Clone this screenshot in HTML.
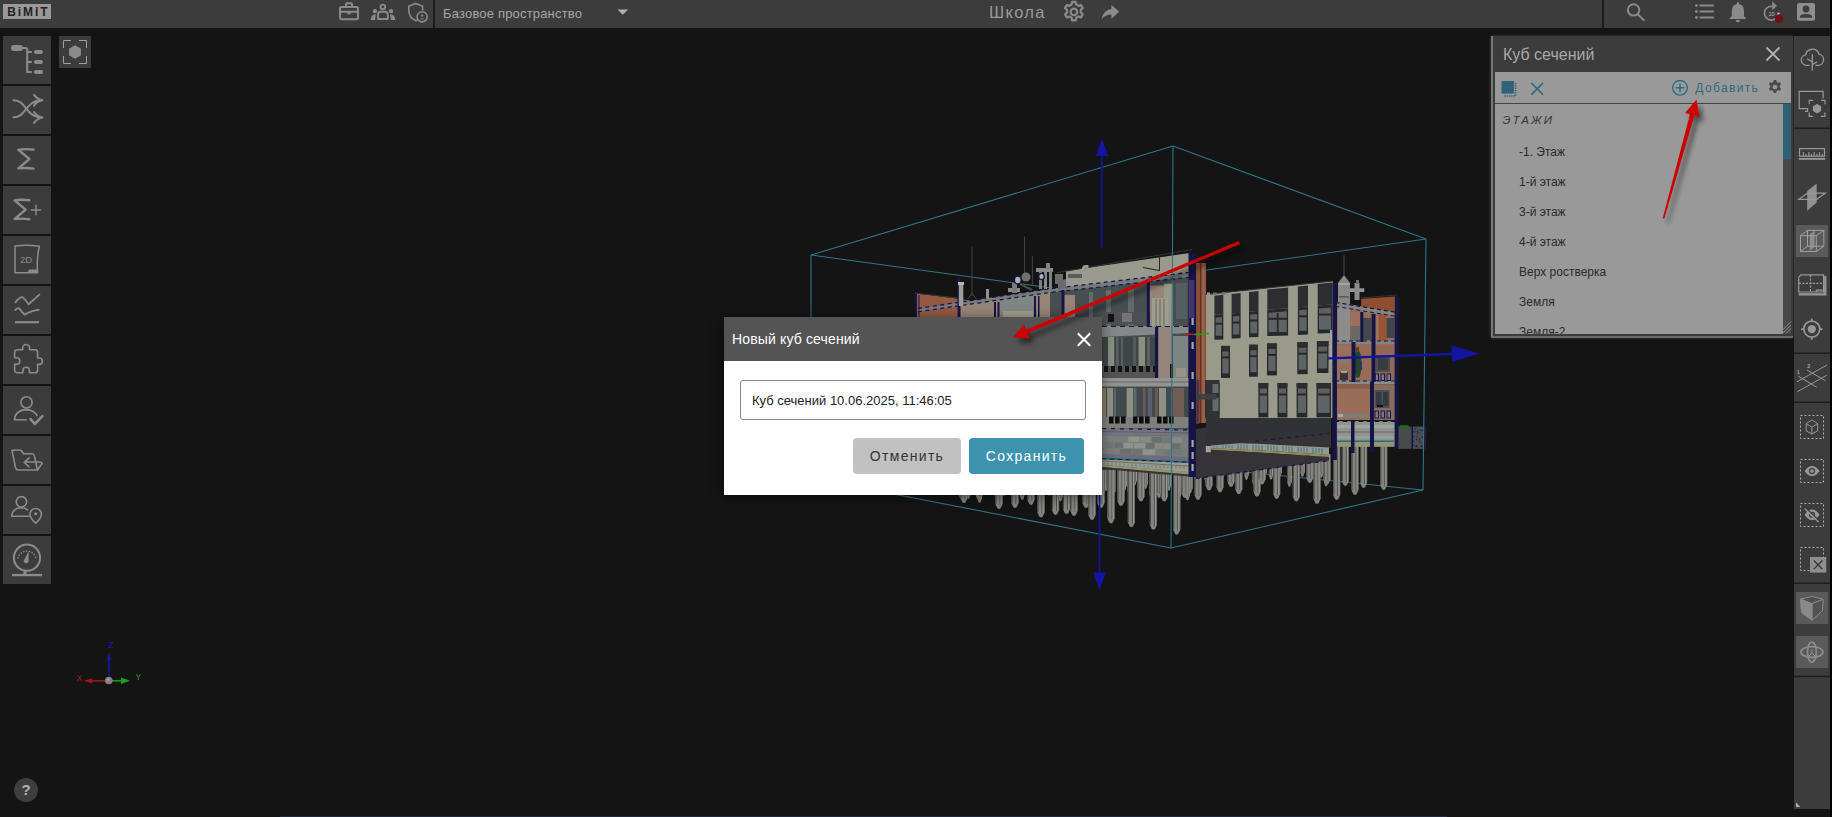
<!DOCTYPE html>
<html lang="ru">
<head>
<meta charset="utf-8">
<title>BIMIT</title>
<style>
*{box-sizing:border-box;margin:0;padding:0}
html,body{width:1832px;height:817px;overflow:hidden;background:#141414;font-family:"Liberation Sans",sans-serif;}
#app{position:absolute;left:0;top:0;width:1832px;height:817px;background:#141414;overflow:hidden}
.abs{position:absolute}
#topbar{position:absolute;left:0;top:0;width:1830px;height:28px;background:#3c3c3c}
#rightedge{position:absolute;left:1830px;top:0;width:2px;height:817px;background:#000}
.ic{position:absolute;overflow:visible}
.lbtn{position:absolute;left:3px;width:48px;height:48px;background:#3c3c3c}
.lbtn svg{position:absolute;left:0;top:0;width:48px;height:48px;overflow:visible}
#logo{position:absolute;left:3px;top:4px;width:48px;height:15px;background:#999;color:#222;font-weight:bold;font-size:12px;line-height:17.200px;text-align:left;padding-left:4.300px;letter-spacing:1.900px;white-space:nowrap}#logo i{font-style:normal;position:relative}#logo i::after{content:"";position:absolute;left:0.500px;top:2px;width:2.400px;height:2.400px;border-radius:.600px;background:#b00c0c}
.tdiv{position:absolute;top:0;height:28px;width:2px;background:#1c1c1c}
#space{position:absolute;left:443px;top:0;height:28px;line-height:27px;font-size:13px;letter-spacing:.180px;color:#a6a6a6;white-space:nowrap}
#proj{position:absolute;left:989px;top:0;height:28px;line-height:24px;font-size:16.500px;letter-spacing:1.300px;color:#9a9a9a;white-space:nowrap}
/* right toolbar */
#rtool{position:absolute;left:1794px;top:36px;width:36px;height:773px;background:#3c3c3c}
/* panel */
#panel{position:absolute;left:1491px;top:36px;width:302px;height:302px;background:#3c3c3c;border-left:2px solid #777;border-bottom:2px solid #6a6a6a;box-shadow:0 0 3px rgba(120,120,120,.5)}
#ptitle{position:absolute;left:10px;top:1px;height:35px;line-height:35px;font-size:16px;color:#a9a9a9;white-space:nowrap}
#pbar{position:absolute;left:2px;top:36px;width:296px;height:32px;background:#999;border-bottom:1px solid #444}
#plist{position:absolute;left:2px;top:68px;width:296px;height:230px;background:#999;overflow:hidden}
.pi{position:absolute;left:24px;font-size:12px;color:#2a2a2a;white-space:nowrap;height:30px;line-height:30px}
/* dialog */
#dlg{position:absolute;left:724px;top:317px;width:378px;height:178px;background:#fff;box-shadow:0 2px 12px rgba(0,0,0,.45)}
#dhead{position:absolute;left:0;top:0;width:378px;height:44px;background:#545454}
#dtitle{position:absolute;left:8px;top:0;height:44px;line-height:44px;font-size:14px;letter-spacing:.150px;color:#fff;white-space:nowrap}
#dinp{position:absolute;left:16px;top:63px;width:346px;height:40px;border:1px solid #8a8a8a;border-radius:3px;font-size:13px;color:#222;line-height:39.500px;padding-left:11px;white-space:nowrap}
.dbtn{position:absolute;top:121px;height:36px;border-radius:4px;font-size:14px;line-height:36px;text-align:center;letter-spacing:1.300px;white-space:nowrap}
</style>
</head>
<body>
<div id="app">

<!-- 3D SCENE -->
<svg id="scene" class="abs" style="left:0;top:0" width="1832" height="817" viewBox="0 0 1832 817">
<!--SCENE-->
<line x1="811.0" y1="255.0" x2="1066.0" y2="290.0" stroke="#2f7689" stroke-width="1.00" />
<line x1="1426.0" y1="239.0" x2="1066.0" y2="290.0" stroke="#2f7689" stroke-width="1.00" />
<line x1="1423.0" y1="490.0" x2="1066.0" y2="454.0" stroke="#2f7689" stroke-width="1.00" />
<line x1="811.0" y1="478.0" x2="1066.0" y2="454.0" stroke="#2f7689" stroke-width="1.00" />
<line x1="1066.0" y1="290.0" x2="1066.0" y2="454.0" stroke="#2f7689" stroke-width="1.00" />
<polygon points="955.3,462.0 959.3,462.0 959.3,480.5 958.2,484.7 957.3,485.5 956.4,484.7 955.3,480.5" fill="#82847c" />
<rect x="955.3" y="462.0" width="1.1" height="18.5" fill="#4a4a48" />
<rect x="957.9" y="462.0" width="1.4" height="18.5" fill="#666664" />
<rect x="957.6" y="462.0" width="1.0" height="19.5" fill="#50504e" />
<rect x="958.2" y="462.0" width="1.2" height="19.0" fill="#969696" />
<polygon points="963.6,462.0 967.6,462.0 967.6,479.7 966.5,483.9 965.6,484.7 964.7,483.9 963.6,479.7" fill="#82847c" />
<rect x="963.6" y="462.0" width="1.1" height="17.7" fill="#4a4a48" />
<rect x="966.2" y="462.0" width="1.4" height="17.7" fill="#666664" />
<rect x="965.9" y="462.0" width="1.0" height="18.7" fill="#50504e" />
<rect x="966.5" y="462.0" width="1.2" height="18.2" fill="#969696" />
<polygon points="970.1,462.0 974.1,462.0 974.1,482.7 973.0,486.9 972.1,487.7 971.2,486.9 970.1,482.7" fill="#82847c" />
<rect x="970.1" y="462.0" width="1.1" height="20.7" fill="#4a4a48" />
<rect x="972.7" y="462.0" width="1.4" height="20.7" fill="#666664" />
<rect x="972.4" y="462.0" width="1.0" height="21.7" fill="#50504e" />
<rect x="973.0" y="462.0" width="1.2" height="21.2" fill="#969696" />
<polygon points="975.2,462.0 979.2,462.0 979.2,484.1 978.1,488.3 977.2,489.1 976.3,488.3 975.2,484.1" fill="#82847c" />
<rect x="975.2" y="462.0" width="1.1" height="22.1" fill="#4a4a48" />
<rect x="977.8" y="462.0" width="1.4" height="22.1" fill="#666664" />
<rect x="977.5" y="462.0" width="1.0" height="23.1" fill="#50504e" />
<rect x="978.1" y="462.0" width="1.2" height="22.6" fill="#969696" />
<polygon points="982.1,462.0 986.1,462.0 986.1,483.3 985.0,487.5 984.1,488.3 983.2,487.5 982.1,483.3" fill="#82847c" />
<rect x="982.1" y="462.0" width="1.1" height="21.3" fill="#4a4a48" />
<rect x="984.7" y="462.0" width="1.4" height="21.3" fill="#666664" />
<rect x="984.4" y="462.0" width="1.0" height="22.3" fill="#50504e" />
<rect x="985.0" y="462.0" width="1.2" height="21.8" fill="#969696" />
<polygon points="989.3,462.0 993.3,462.0 993.3,479.9 992.2,484.1 991.3,484.9 990.4,484.1 989.3,479.9" fill="#82847c" />
<rect x="989.3" y="462.0" width="1.1" height="17.9" fill="#4a4a48" />
<rect x="991.9" y="462.0" width="1.4" height="17.9" fill="#666664" />
<rect x="991.6" y="462.0" width="1.0" height="18.9" fill="#50504e" />
<rect x="992.2" y="462.0" width="1.2" height="18.4" fill="#969696" />
<polygon points="997.7,462.0 1001.7,462.0 1001.7,487.3 1000.6,491.5 999.7,492.3 998.8,491.5 997.7,487.3" fill="#82847c" />
<rect x="997.7" y="462.0" width="1.1" height="25.3" fill="#4a4a48" />
<rect x="1000.3" y="462.0" width="1.4" height="25.3" fill="#666664" />
<rect x="1000.0" y="462.0" width="1.0" height="26.3" fill="#50504e" />
<rect x="1000.6" y="462.0" width="1.2" height="25.8" fill="#969696" />
<polygon points="1003.5,462.0 1007.5,462.0 1007.5,481.2 1006.4,485.4 1005.5,486.2 1004.6,485.4 1003.5,481.2" fill="#82847c" />
<rect x="1003.5" y="462.0" width="1.1" height="19.2" fill="#4a4a48" />
<rect x="1006.1" y="462.0" width="1.4" height="19.2" fill="#666664" />
<rect x="1005.8" y="462.0" width="1.0" height="20.2" fill="#50504e" />
<rect x="1006.4" y="462.0" width="1.2" height="19.7" fill="#969696" />
<polygon points="1012.5,462.0 1016.5,462.0 1016.5,488.5 1015.4,492.7 1014.5,493.5 1013.6,492.7 1012.5,488.5" fill="#82847c" />
<rect x="1012.5" y="462.0" width="1.1" height="26.5" fill="#4a4a48" />
<rect x="1015.1" y="462.0" width="1.4" height="26.5" fill="#666664" />
<rect x="1014.8" y="462.0" width="1.0" height="27.5" fill="#50504e" />
<rect x="1015.4" y="462.0" width="1.2" height="27.0" fill="#969696" />
<polygon points="1019.3,462.0 1023.3,462.0 1023.3,483.0 1022.2,487.2 1021.3,488.0 1020.4,487.2 1019.3,483.0" fill="#82847c" />
<rect x="1019.3" y="462.0" width="1.1" height="21.0" fill="#4a4a48" />
<rect x="1021.9" y="462.0" width="1.4" height="21.0" fill="#666664" />
<rect x="1021.6" y="462.0" width="1.0" height="22.0" fill="#50504e" />
<rect x="1022.2" y="462.0" width="1.2" height="21.5" fill="#969696" />
<polygon points="1027.9,462.0 1031.9,462.0 1031.9,479.5 1030.8,483.7 1029.9,484.5 1029.0,483.7 1027.9,479.5" fill="#82847c" />
<rect x="1027.9" y="462.0" width="1.1" height="17.5" fill="#4a4a48" />
<rect x="1030.5" y="462.0" width="1.4" height="17.5" fill="#666664" />
<rect x="1030.2" y="462.0" width="1.0" height="18.5" fill="#50504e" />
<rect x="1030.8" y="462.0" width="1.2" height="18.0" fill="#969696" />
<polygon points="1034.4,462.0 1038.4,462.0 1038.4,481.9 1037.3,486.1 1036.4,486.9 1035.5,486.1 1034.4,481.9" fill="#82847c" />
<rect x="1034.4" y="462.0" width="1.1" height="19.9" fill="#4a4a48" />
<rect x="1037.0" y="462.0" width="1.4" height="19.9" fill="#666664" />
<rect x="1036.7" y="462.0" width="1.0" height="20.9" fill="#50504e" />
<rect x="1037.3" y="462.0" width="1.2" height="20.4" fill="#969696" />
<polygon points="1038.6,462.0 1042.6,462.0 1042.6,480.2 1041.5,484.4 1040.6,485.2 1039.7,484.4 1038.6,480.2" fill="#82847c" />
<rect x="1038.6" y="462.0" width="1.1" height="18.2" fill="#4a4a48" />
<rect x="1041.2" y="462.0" width="1.4" height="18.2" fill="#666664" />
<rect x="1040.9" y="462.0" width="1.0" height="19.2" fill="#50504e" />
<rect x="1041.5" y="462.0" width="1.2" height="18.7" fill="#969696" />
<polygon points="1046.2,462.0 1050.2,462.0 1050.2,487.2 1049.1,491.4 1048.2,492.2 1047.3,491.4 1046.2,487.2" fill="#82847c" />
<rect x="1046.2" y="462.0" width="1.1" height="25.2" fill="#4a4a48" />
<rect x="1048.8" y="462.0" width="1.4" height="25.2" fill="#666664" />
<rect x="1048.5" y="462.0" width="1.0" height="26.2" fill="#50504e" />
<rect x="1049.1" y="462.0" width="1.2" height="25.7" fill="#969696" />
<polygon points="1052.7,462.0 1056.7,462.0 1056.7,484.8 1055.6,489.0 1054.7,489.8 1053.8,489.0 1052.7,484.8" fill="#82847c" />
<rect x="1052.7" y="462.0" width="1.1" height="22.8" fill="#4a4a48" />
<rect x="1055.3" y="462.0" width="1.4" height="22.8" fill="#666664" />
<rect x="1055.0" y="462.0" width="1.0" height="23.8" fill="#50504e" />
<rect x="1055.6" y="462.0" width="1.2" height="23.3" fill="#969696" />
<polygon points="1061.6,462.0 1065.6,462.0 1065.6,482.7 1064.5,486.9 1063.6,487.7 1062.7,486.9 1061.6,482.7" fill="#82847c" />
<rect x="1061.6" y="462.0" width="1.1" height="20.7" fill="#4a4a48" />
<rect x="1064.2" y="462.0" width="1.4" height="20.7" fill="#666664" />
<rect x="1063.9" y="462.0" width="1.0" height="21.7" fill="#50504e" />
<rect x="1064.5" y="462.0" width="1.2" height="21.2" fill="#969696" />
<polygon points="1068.2,462.0 1072.2,462.0 1072.2,479.6 1071.1,483.8 1070.2,484.6 1069.3,483.8 1068.2,479.6" fill="#82847c" />
<rect x="1068.2" y="462.0" width="1.1" height="17.6" fill="#4a4a48" />
<rect x="1070.8" y="462.0" width="1.4" height="17.6" fill="#666664" />
<rect x="1070.5" y="462.0" width="1.0" height="18.6" fill="#50504e" />
<rect x="1071.1" y="462.0" width="1.2" height="18.1" fill="#969696" />
<polygon points="1073.2,462.0 1077.2,462.0 1077.2,481.1 1076.1,485.3 1075.2,486.1 1074.3,485.3 1073.2,481.1" fill="#82847c" />
<rect x="1073.2" y="462.0" width="1.1" height="19.1" fill="#4a4a48" />
<rect x="1075.8" y="462.0" width="1.4" height="19.1" fill="#666664" />
<rect x="1075.5" y="462.0" width="1.0" height="20.1" fill="#50504e" />
<rect x="1076.1" y="462.0" width="1.2" height="19.6" fill="#969696" />
<polygon points="1082.7,462.0 1086.7,462.0 1086.7,483.3 1085.6,487.5 1084.7,488.3 1083.8,487.5 1082.7,483.3" fill="#82847c" />
<rect x="1082.7" y="462.0" width="1.1" height="21.3" fill="#4a4a48" />
<rect x="1085.3" y="462.0" width="1.4" height="21.3" fill="#666664" />
<rect x="1085.0" y="462.0" width="1.0" height="22.3" fill="#50504e" />
<rect x="1085.6" y="462.0" width="1.2" height="21.8" fill="#969696" />
<polygon points="1088.3,462.0 1092.3,462.0 1092.3,484.9 1091.2,489.1 1090.3,489.9 1089.4,489.1 1088.3,484.9" fill="#82847c" />
<rect x="1088.3" y="462.0" width="1.1" height="22.9" fill="#4a4a48" />
<rect x="1090.9" y="462.0" width="1.4" height="22.9" fill="#666664" />
<rect x="1090.6" y="462.0" width="1.0" height="23.9" fill="#50504e" />
<rect x="1091.2" y="462.0" width="1.2" height="23.4" fill="#969696" />
<polygon points="1095.8,462.0 1099.8,462.0 1099.8,482.0 1098.7,486.2 1097.8,487.0 1096.9,486.2 1095.8,482.0" fill="#82847c" />
<rect x="1095.8" y="462.0" width="1.1" height="20.0" fill="#4a4a48" />
<rect x="1098.4" y="462.0" width="1.4" height="20.0" fill="#666664" />
<rect x="1098.1" y="462.0" width="1.0" height="21.0" fill="#50504e" />
<rect x="1098.7" y="462.0" width="1.2" height="20.5" fill="#969696" />
<polygon points="1104.2,462.0 1108.2,462.0 1108.2,486.0 1107.1,490.2 1106.2,491.0 1105.3,490.2 1104.2,486.0" fill="#82847c" />
<rect x="1104.2" y="462.0" width="1.1" height="24.0" fill="#4a4a48" />
<rect x="1106.8" y="462.0" width="1.4" height="24.0" fill="#666664" />
<rect x="1106.5" y="462.0" width="1.0" height="25.0" fill="#50504e" />
<rect x="1107.1" y="462.0" width="1.2" height="24.5" fill="#969696" />
<polygon points="1109.0,462.0 1113.0,462.0 1113.0,484.7 1111.9,488.9 1111.0,489.7 1110.1,488.9 1109.0,484.7" fill="#82847c" />
<rect x="1109.0" y="462.0" width="1.1" height="22.7" fill="#4a4a48" />
<rect x="1111.6" y="462.0" width="1.4" height="22.7" fill="#666664" />
<rect x="1111.3" y="462.0" width="1.0" height="23.7" fill="#50504e" />
<rect x="1111.9" y="462.0" width="1.2" height="23.2" fill="#969696" />
<polygon points="1117.1,462.0 1121.1,462.0 1121.1,487.8 1120.0,492.0 1119.1,492.8 1118.2,492.0 1117.1,487.8" fill="#82847c" />
<rect x="1117.1" y="462.0" width="1.1" height="25.8" fill="#4a4a48" />
<rect x="1119.7" y="462.0" width="1.4" height="25.8" fill="#666664" />
<rect x="1119.4" y="462.0" width="1.0" height="26.8" fill="#50504e" />
<rect x="1120.0" y="462.0" width="1.2" height="26.3" fill="#969696" />
<polygon points="1124.9,462.0 1128.9,462.0 1128.9,481.9 1127.8,486.1 1126.9,486.9 1126.0,486.1 1124.9,481.9" fill="#82847c" />
<rect x="1124.9" y="462.0" width="1.1" height="19.9" fill="#4a4a48" />
<rect x="1127.5" y="462.0" width="1.4" height="19.9" fill="#666664" />
<rect x="1127.2" y="462.0" width="1.0" height="20.9" fill="#50504e" />
<rect x="1127.8" y="462.0" width="1.2" height="20.4" fill="#969696" />
<polygon points="1132.9,462.0 1136.9,462.0 1136.9,480.2 1135.8,484.4 1134.9,485.2 1134.0,484.4 1132.9,480.2" fill="#82847c" />
<rect x="1132.9" y="462.0" width="1.1" height="18.2" fill="#4a4a48" />
<rect x="1135.5" y="462.0" width="1.4" height="18.2" fill="#666664" />
<rect x="1135.2" y="462.0" width="1.0" height="19.2" fill="#50504e" />
<rect x="1135.8" y="462.0" width="1.2" height="18.7" fill="#969696" />
<polygon points="1137.7,462.0 1141.7,462.0 1141.7,486.6 1140.6,490.8 1139.7,491.6 1138.8,490.8 1137.7,486.6" fill="#82847c" />
<rect x="1137.7" y="462.0" width="1.1" height="24.6" fill="#4a4a48" />
<rect x="1140.3" y="462.0" width="1.4" height="24.6" fill="#666664" />
<rect x="1140.0" y="462.0" width="1.0" height="25.6" fill="#50504e" />
<rect x="1140.6" y="462.0" width="1.2" height="25.1" fill="#969696" />
<polygon points="1143.6,462.0 1147.6,462.0 1147.6,483.9 1146.5,488.1 1145.6,488.9 1144.7,488.1 1143.6,483.9" fill="#82847c" />
<rect x="1143.6" y="462.0" width="1.1" height="21.9" fill="#4a4a48" />
<rect x="1146.2" y="462.0" width="1.4" height="21.9" fill="#666664" />
<rect x="1145.9" y="462.0" width="1.0" height="22.9" fill="#50504e" />
<rect x="1146.5" y="462.0" width="1.2" height="22.4" fill="#969696" />
<polygon points="1150.2,462.0 1154.2,462.0 1154.2,485.7 1153.1,489.9 1152.2,490.7 1151.3,489.9 1150.2,485.7" fill="#82847c" />
<rect x="1150.2" y="462.0" width="1.1" height="23.7" fill="#4a4a48" />
<rect x="1152.8" y="462.0" width="1.4" height="23.7" fill="#666664" />
<rect x="1152.5" y="462.0" width="1.0" height="24.7" fill="#50504e" />
<rect x="1153.1" y="462.0" width="1.2" height="24.2" fill="#969696" />
<polygon points="1160.1,462.0 1164.1,462.0 1164.1,484.7 1163.0,488.9 1162.1,489.7 1161.2,488.9 1160.1,484.7" fill="#82847c" />
<rect x="1160.1" y="462.0" width="1.1" height="22.7" fill="#4a4a48" />
<rect x="1162.7" y="462.0" width="1.4" height="22.7" fill="#666664" />
<rect x="1162.4" y="462.0" width="1.0" height="23.7" fill="#50504e" />
<rect x="1163.0" y="462.0" width="1.2" height="23.2" fill="#969696" />
<polygon points="1167.5,462.0 1171.5,462.0 1171.5,482.1 1170.4,486.3 1169.5,487.1 1168.6,486.3 1167.5,482.1" fill="#82847c" />
<rect x="1167.5" y="462.0" width="1.1" height="20.1" fill="#4a4a48" />
<rect x="1170.1" y="462.0" width="1.4" height="20.1" fill="#666664" />
<rect x="1169.8" y="462.0" width="1.0" height="21.1" fill="#50504e" />
<rect x="1170.4" y="462.0" width="1.2" height="20.6" fill="#969696" />
<polygon points="1173.8,462.0 1177.8,462.0 1177.8,484.9 1176.7,489.1 1175.8,489.9 1174.9,489.1 1173.8,484.9" fill="#82847c" />
<rect x="1173.8" y="462.0" width="1.1" height="22.9" fill="#4a4a48" />
<rect x="1176.4" y="462.0" width="1.4" height="22.9" fill="#666664" />
<rect x="1176.1" y="462.0" width="1.0" height="23.9" fill="#50504e" />
<rect x="1176.7" y="462.0" width="1.2" height="23.4" fill="#969696" />
<polygon points="1180.3,462.0 1184.3,462.0 1184.3,483.6 1183.2,487.8 1182.3,488.6 1181.4,487.8 1180.3,483.6" fill="#82847c" />
<rect x="1180.3" y="462.0" width="1.1" height="21.6" fill="#4a4a48" />
<rect x="1182.9" y="462.0" width="1.4" height="21.6" fill="#666664" />
<rect x="1182.6" y="462.0" width="1.0" height="22.6" fill="#50504e" />
<rect x="1183.2" y="462.0" width="1.2" height="22.1" fill="#969696" />
<polygon points="1188.4,462.0 1192.4,462.0 1192.4,488.4 1191.3,492.6 1190.4,493.4 1189.5,492.6 1188.4,488.4" fill="#82847c" />
<rect x="1188.4" y="462.0" width="1.1" height="26.4" fill="#4a4a48" />
<rect x="1191.0" y="462.0" width="1.4" height="26.4" fill="#666664" />
<rect x="1190.7" y="462.0" width="1.0" height="27.4" fill="#50504e" />
<rect x="1191.3" y="462.0" width="1.2" height="26.9" fill="#969696" />
<polygon points="958.4,462.0 963.4,462.0 963.4,493.6 962.0,497.8 960.9,498.6 959.8,497.8 958.4,493.6" fill="#82847c" />
<rect x="958.4" y="462.0" width="1.1" height="31.6" fill="#4a4a48" />
<rect x="962.0" y="462.0" width="1.4" height="31.6" fill="#666664" />
<rect x="961.3" y="462.0" width="1.0" height="32.6" fill="#50504e" />
<rect x="962.0" y="462.0" width="1.2" height="32.1" fill="#969696" />
<polygon points="965.7,462.0 970.7,462.0 970.7,494.1 969.4,498.3 968.2,499.1 967.1,498.3 965.7,494.1" fill="#82847c" />
<rect x="965.7" y="462.0" width="1.1" height="32.1" fill="#4a4a48" />
<rect x="969.3" y="462.0" width="1.4" height="32.1" fill="#666664" />
<rect x="968.6" y="462.0" width="1.0" height="33.1" fill="#50504e" />
<rect x="969.4" y="462.0" width="1.2" height="32.6" fill="#969696" />
<polygon points="977.1,462.0 982.1,462.0 982.1,497.9 980.7,502.1 979.6,502.9 978.5,502.1 977.1,497.9" fill="#82847c" />
<rect x="977.1" y="462.0" width="1.1" height="35.9" fill="#4a4a48" />
<rect x="980.7" y="462.0" width="1.4" height="35.9" fill="#666664" />
<rect x="980.0" y="462.0" width="1.0" height="36.9" fill="#50504e" />
<rect x="980.7" y="462.0" width="1.2" height="36.4" fill="#969696" />
<polygon points="986.8,462.0 991.8,462.0 991.8,488.7 990.4,492.9 989.3,493.7 988.2,492.9 986.8,488.7" fill="#82847c" />
<rect x="986.8" y="462.0" width="1.1" height="26.7" fill="#4a4a48" />
<rect x="990.4" y="462.0" width="1.4" height="26.7" fill="#666664" />
<rect x="989.7" y="462.0" width="1.0" height="27.7" fill="#50504e" />
<rect x="990.4" y="462.0" width="1.2" height="27.2" fill="#969696" />
<polygon points="994.0,462.0 999.0,462.0 999.0,493.7 997.7,497.9 996.5,498.7 995.4,497.9 994.0,493.7" fill="#82847c" />
<rect x="994.0" y="462.0" width="1.1" height="31.7" fill="#4a4a48" />
<rect x="997.6" y="462.0" width="1.4" height="31.7" fill="#666664" />
<rect x="996.9" y="462.0" width="1.0" height="32.7" fill="#50504e" />
<rect x="997.7" y="462.0" width="1.2" height="32.2" fill="#969696" />
<polygon points="1001.6,462.0 1006.6,462.0 1006.6,491.0 1005.2,495.2 1004.1,496.0 1003.0,495.2 1001.6,491.0" fill="#82847c" />
<rect x="1001.6" y="462.0" width="1.1" height="29.0" fill="#4a4a48" />
<rect x="1005.2" y="462.0" width="1.4" height="29.0" fill="#666664" />
<rect x="1004.5" y="462.0" width="1.0" height="30.0" fill="#50504e" />
<rect x="1005.2" y="462.0" width="1.2" height="29.5" fill="#969696" />
<polygon points="1011.2,462.0 1016.2,462.0 1016.2,486.5 1014.8,490.7 1013.7,491.5 1012.5,490.7 1011.2,486.5" fill="#82847c" />
<rect x="1011.2" y="462.0" width="1.1" height="24.5" fill="#4a4a48" />
<rect x="1014.8" y="462.0" width="1.4" height="24.5" fill="#666664" />
<rect x="1014.0" y="462.0" width="1.0" height="25.5" fill="#50504e" />
<rect x="1014.8" y="462.0" width="1.2" height="25.0" fill="#969696" />
<polygon points="1019.7,462.0 1024.7,462.0 1024.7,495.0 1023.4,499.2 1022.2,500.0 1021.1,499.2 1019.7,495.0" fill="#82847c" />
<rect x="1019.7" y="462.0" width="1.1" height="33.0" fill="#4a4a48" />
<rect x="1023.3" y="462.0" width="1.4" height="33.0" fill="#666664" />
<rect x="1022.6" y="462.0" width="1.0" height="34.0" fill="#50504e" />
<rect x="1023.4" y="462.0" width="1.2" height="33.5" fill="#969696" />
<polygon points="1029.0,462.0 1034.0,462.0 1034.0,488.2 1032.6,492.4 1031.5,493.2 1030.4,492.4 1029.0,488.2" fill="#82847c" />
<rect x="1029.0" y="462.0" width="1.1" height="26.2" fill="#4a4a48" />
<rect x="1032.6" y="462.0" width="1.4" height="26.2" fill="#666664" />
<rect x="1031.9" y="462.0" width="1.0" height="27.2" fill="#50504e" />
<rect x="1032.6" y="462.0" width="1.2" height="26.7" fill="#969696" />
<polygon points="1039.1,462.0 1044.1,462.0 1044.1,496.3 1042.7,500.5 1041.6,501.3 1040.4,500.5 1039.1,496.3" fill="#82847c" />
<rect x="1039.1" y="462.0" width="1.1" height="34.3" fill="#4a4a48" />
<rect x="1042.7" y="462.0" width="1.4" height="34.3" fill="#666664" />
<rect x="1041.9" y="462.0" width="1.0" height="35.3" fill="#50504e" />
<rect x="1042.7" y="462.0" width="1.2" height="34.8" fill="#969696" />
<polygon points="1046.8,462.0 1051.8,462.0 1051.8,490.8 1050.4,495.0 1049.3,495.8 1048.2,495.0 1046.8,490.8" fill="#82847c" />
<rect x="1046.8" y="462.0" width="1.1" height="28.8" fill="#4a4a48" />
<rect x="1050.4" y="462.0" width="1.4" height="28.8" fill="#666664" />
<rect x="1049.7" y="462.0" width="1.0" height="29.8" fill="#50504e" />
<rect x="1050.4" y="462.0" width="1.2" height="29.3" fill="#969696" />
<polygon points="1057.7,462.0 1062.7,462.0 1062.7,496.5 1061.3,500.7 1060.2,501.5 1059.1,500.7 1057.7,496.5" fill="#82847c" />
<rect x="1057.7" y="462.0" width="1.1" height="34.5" fill="#4a4a48" />
<rect x="1061.3" y="462.0" width="1.4" height="34.5" fill="#666664" />
<rect x="1060.6" y="462.0" width="1.0" height="35.5" fill="#50504e" />
<rect x="1061.3" y="462.0" width="1.2" height="35.0" fill="#969696" />
<polygon points="1067.8,462.0 1072.8,462.0 1072.8,496.2 1071.4,500.4 1070.3,501.2 1069.2,500.4 1067.8,496.2" fill="#82847c" />
<rect x="1067.8" y="462.0" width="1.1" height="34.2" fill="#4a4a48" />
<rect x="1071.4" y="462.0" width="1.4" height="34.2" fill="#666664" />
<rect x="1070.7" y="462.0" width="1.0" height="35.2" fill="#50504e" />
<rect x="1071.4" y="462.0" width="1.2" height="34.7" fill="#969696" />
<polygon points="1074.6,462.0 1079.6,462.0 1079.6,490.4 1078.2,494.6 1077.1,495.4 1076.0,494.6 1074.6,490.4" fill="#82847c" />
<rect x="1074.6" y="462.0" width="1.1" height="28.4" fill="#4a4a48" />
<rect x="1078.2" y="462.0" width="1.4" height="28.4" fill="#666664" />
<rect x="1077.5" y="462.0" width="1.0" height="29.4" fill="#50504e" />
<rect x="1078.2" y="462.0" width="1.2" height="28.9" fill="#969696" />
<polygon points="1083.9,462.0 1088.9,462.0 1088.9,496.5 1087.6,500.7 1086.4,501.5 1085.3,500.7 1083.9,496.5" fill="#82847c" />
<rect x="1083.9" y="462.0" width="1.1" height="34.5" fill="#4a4a48" />
<rect x="1087.5" y="462.0" width="1.4" height="34.5" fill="#666664" />
<rect x="1086.8" y="462.0" width="1.0" height="35.5" fill="#50504e" />
<rect x="1087.6" y="462.0" width="1.2" height="35.0" fill="#969696" />
<polygon points="1095.3,462.0 1100.3,462.0 1100.3,487.0 1099.0,491.2 1097.8,492.0 1096.7,491.2 1095.3,487.0" fill="#82847c" />
<rect x="1095.3" y="462.0" width="1.1" height="25.0" fill="#4a4a48" />
<rect x="1098.9" y="462.0" width="1.4" height="25.0" fill="#666664" />
<rect x="1098.2" y="462.0" width="1.0" height="26.0" fill="#50504e" />
<rect x="1099.0" y="462.0" width="1.2" height="25.5" fill="#969696" />
<polygon points="1101.2,462.0 1106.2,462.0 1106.2,488.0 1104.8,492.2 1103.7,493.0 1102.6,492.2 1101.2,488.0" fill="#82847c" />
<rect x="1101.2" y="462.0" width="1.1" height="26.0" fill="#4a4a48" />
<rect x="1104.8" y="462.0" width="1.4" height="26.0" fill="#666664" />
<rect x="1104.1" y="462.0" width="1.0" height="27.0" fill="#50504e" />
<rect x="1104.8" y="462.0" width="1.2" height="26.5" fill="#969696" />
<polygon points="1110.4,462.0 1115.4,462.0 1115.4,491.3 1114.1,495.5 1112.9,496.3 1111.8,495.5 1110.4,491.3" fill="#82847c" />
<rect x="1110.4" y="462.0" width="1.1" height="29.3" fill="#4a4a48" />
<rect x="1114.0" y="462.0" width="1.4" height="29.3" fill="#666664" />
<rect x="1113.3" y="462.0" width="1.0" height="30.3" fill="#50504e" />
<rect x="1114.1" y="462.0" width="1.2" height="29.8" fill="#969696" />
<polygon points="1120.9,462.0 1125.9,462.0 1125.9,488.4 1124.5,492.6 1123.4,493.4 1122.2,492.6 1120.9,488.4" fill="#82847c" />
<rect x="1120.9" y="462.0" width="1.1" height="26.4" fill="#4a4a48" />
<rect x="1124.5" y="462.0" width="1.4" height="26.4" fill="#666664" />
<rect x="1123.7" y="462.0" width="1.0" height="27.4" fill="#50504e" />
<rect x="1124.5" y="462.0" width="1.2" height="26.9" fill="#969696" />
<polygon points="1127.5,462.0 1132.5,462.0 1132.5,490.4 1131.1,494.6 1130.0,495.4 1128.9,494.6 1127.5,490.4" fill="#82847c" />
<rect x="1127.5" y="462.0" width="1.1" height="28.4" fill="#4a4a48" />
<rect x="1131.1" y="462.0" width="1.4" height="28.4" fill="#666664" />
<rect x="1130.4" y="462.0" width="1.0" height="29.4" fill="#50504e" />
<rect x="1131.1" y="462.0" width="1.2" height="28.9" fill="#969696" />
<polygon points="1138.0,462.0 1143.0,462.0 1143.0,492.4 1141.6,496.6 1140.5,497.4 1139.4,496.6 1138.0,492.4" fill="#82847c" />
<rect x="1138.0" y="462.0" width="1.1" height="30.4" fill="#4a4a48" />
<rect x="1141.6" y="462.0" width="1.4" height="30.4" fill="#666664" />
<rect x="1140.9" y="462.0" width="1.0" height="31.4" fill="#50504e" />
<rect x="1141.6" y="462.0" width="1.2" height="30.9" fill="#969696" />
<polygon points="1149.3,462.0 1154.3,462.0 1154.3,494.0 1152.9,498.2 1151.8,499.0 1150.7,498.2 1149.3,494.0" fill="#82847c" />
<rect x="1149.3" y="462.0" width="1.1" height="32.0" fill="#4a4a48" />
<rect x="1152.9" y="462.0" width="1.4" height="32.0" fill="#666664" />
<rect x="1152.2" y="462.0" width="1.0" height="33.0" fill="#50504e" />
<rect x="1152.9" y="462.0" width="1.2" height="32.5" fill="#969696" />
<polygon points="1156.6,462.0 1161.6,462.0 1161.6,493.0 1160.2,497.2 1159.1,498.0 1157.9,497.2 1156.6,493.0" fill="#82847c" />
<rect x="1156.6" y="462.0" width="1.1" height="31.0" fill="#4a4a48" />
<rect x="1160.2" y="462.0" width="1.4" height="31.0" fill="#666664" />
<rect x="1159.4" y="462.0" width="1.0" height="32.0" fill="#50504e" />
<rect x="1160.2" y="462.0" width="1.2" height="31.5" fill="#969696" />
<polygon points="1166.2,462.0 1171.2,462.0 1171.2,485.7 1169.8,489.9 1168.7,490.7 1167.6,489.9 1166.2,485.7" fill="#82847c" />
<rect x="1166.2" y="462.0" width="1.1" height="23.7" fill="#4a4a48" />
<rect x="1169.8" y="462.0" width="1.4" height="23.7" fill="#666664" />
<rect x="1169.1" y="462.0" width="1.0" height="24.7" fill="#50504e" />
<rect x="1169.8" y="462.0" width="1.2" height="24.2" fill="#969696" />
<polygon points="1176.1,462.0 1181.1,462.0 1181.1,495.1 1179.7,499.3 1178.6,500.1 1177.5,499.3 1176.1,495.1" fill="#82847c" />
<rect x="1176.1" y="462.0" width="1.1" height="33.1" fill="#4a4a48" />
<rect x="1179.7" y="462.0" width="1.4" height="33.1" fill="#666664" />
<rect x="1179.0" y="462.0" width="1.0" height="34.1" fill="#50504e" />
<rect x="1179.7" y="462.0" width="1.2" height="33.6" fill="#969696" />
<polygon points="1185.0,462.0 1190.0,462.0 1190.0,495.4 1188.6,499.6 1187.5,500.4 1186.4,499.6 1185.0,495.4" fill="#82847c" />
<rect x="1185.0" y="462.0" width="1.1" height="33.4" fill="#4a4a48" />
<rect x="1188.6" y="462.0" width="1.4" height="33.4" fill="#666664" />
<rect x="1187.9" y="462.0" width="1.0" height="34.4" fill="#50504e" />
<rect x="1188.6" y="462.0" width="1.2" height="33.9" fill="#969696" />
<polygon points="960.4,462.0 967.6,462.0 967.6,498.0 965.6,502.2 964.0,503.0 962.4,502.2 960.4,498.0" fill="#82847c" />
<rect x="960.4" y="462.0" width="1.1" height="36.0" fill="#4a4a48" />
<rect x="966.2" y="462.0" width="1.4" height="36.0" fill="#666664" />
<rect x="964.5" y="462.0" width="1.0" height="37.0" fill="#50504e" />
<rect x="965.6" y="462.0" width="1.2" height="36.5" fill="#969696" />
<polygon points="975.4,462.0 982.6,462.0 982.6,495.0 980.6,499.2 979.0,500.0 977.4,499.2 975.4,495.0" fill="#82847c" />
<rect x="975.4" y="462.0" width="1.1" height="33.0" fill="#4a4a48" />
<rect x="981.2" y="462.0" width="1.4" height="33.0" fill="#666664" />
<rect x="979.5" y="462.0" width="1.0" height="34.0" fill="#50504e" />
<rect x="980.6" y="462.0" width="1.2" height="33.5" fill="#969696" />
<polygon points="995.4,462.0 1002.6,462.0 1002.6,504.0 1000.6,508.2 999.0,509.0 997.4,508.2 995.4,504.0" fill="#82847c" />
<rect x="995.4" y="462.0" width="1.1" height="42.0" fill="#4a4a48" />
<rect x="1001.2" y="462.0" width="1.4" height="42.0" fill="#666664" />
<rect x="999.5" y="462.0" width="1.0" height="43.0" fill="#50504e" />
<rect x="1000.6" y="462.0" width="1.2" height="42.5" fill="#969696" />
<polygon points="1011.4,462.0 1018.6,462.0 1018.6,503.0 1016.6,507.2 1015.0,508.0 1013.4,507.2 1011.4,503.0" fill="#82847c" />
<rect x="1011.4" y="462.0" width="1.1" height="41.0" fill="#4a4a48" />
<rect x="1017.2" y="462.0" width="1.4" height="41.0" fill="#666664" />
<rect x="1015.5" y="462.0" width="1.0" height="42.0" fill="#50504e" />
<rect x="1016.6" y="462.0" width="1.2" height="41.5" fill="#969696" />
<polygon points="1027.4,462.0 1034.6,462.0 1034.6,500.0 1032.6,504.2 1031.0,505.0 1029.4,504.2 1027.4,500.0" fill="#82847c" />
<rect x="1027.4" y="462.0" width="1.1" height="38.0" fill="#4a4a48" />
<rect x="1033.2" y="462.0" width="1.4" height="38.0" fill="#666664" />
<rect x="1031.5" y="462.0" width="1.0" height="39.0" fill="#50504e" />
<rect x="1032.6" y="462.0" width="1.2" height="38.5" fill="#969696" />
<polygon points="1037.4,462.0 1044.6,462.0 1044.6,512.5 1042.6,516.7 1041.0,517.5 1039.4,516.7 1037.4,512.5" fill="#82847c" />
<rect x="1037.4" y="462.0" width="1.1" height="50.5" fill="#4a4a48" />
<rect x="1043.2" y="462.0" width="1.4" height="50.5" fill="#666664" />
<rect x="1041.5" y="462.0" width="1.0" height="51.5" fill="#50504e" />
<rect x="1042.6" y="462.0" width="1.2" height="51.0" fill="#969696" />
<polygon points="1051.9,462.0 1059.1,462.0 1059.1,510.0 1057.1,514.2 1055.5,515.0 1053.9,514.2 1051.9,510.0" fill="#82847c" />
<rect x="1051.9" y="462.0" width="1.1" height="48.0" fill="#4a4a48" />
<rect x="1057.7" y="462.0" width="1.4" height="48.0" fill="#666664" />
<rect x="1056.0" y="462.0" width="1.0" height="49.0" fill="#50504e" />
<rect x="1057.1" y="462.0" width="1.2" height="48.5" fill="#969696" />
<polygon points="1062.9,462.0 1070.1,462.0 1070.1,509.0 1068.1,513.2 1066.5,514.0 1064.9,513.2 1062.9,509.0" fill="#82847c" />
<rect x="1062.9" y="462.0" width="1.1" height="47.0" fill="#4a4a48" />
<rect x="1068.7" y="462.0" width="1.4" height="47.0" fill="#666664" />
<rect x="1067.0" y="462.0" width="1.0" height="48.0" fill="#50504e" />
<rect x="1068.1" y="462.0" width="1.2" height="47.5" fill="#969696" />
<polygon points="1070.4,462.0 1077.6,462.0 1077.6,511.0 1075.6,515.2 1074.0,516.0 1072.4,515.2 1070.4,511.0" fill="#82847c" />
<rect x="1070.4" y="462.0" width="1.1" height="49.0" fill="#4a4a48" />
<rect x="1076.2" y="462.0" width="1.4" height="49.0" fill="#666664" />
<rect x="1074.5" y="462.0" width="1.0" height="50.0" fill="#50504e" />
<rect x="1075.6" y="462.0" width="1.2" height="49.5" fill="#969696" />
<polygon points="1082.4,462.0 1089.6,462.0 1089.6,503.0 1087.6,507.2 1086.0,508.0 1084.4,507.2 1082.4,503.0" fill="#82847c" />
<rect x="1082.4" y="462.0" width="1.1" height="41.0" fill="#4a4a48" />
<rect x="1088.2" y="462.0" width="1.4" height="41.0" fill="#666664" />
<rect x="1086.5" y="462.0" width="1.0" height="42.0" fill="#50504e" />
<rect x="1087.6" y="462.0" width="1.2" height="41.5" fill="#969696" />
<polygon points="1088.4,462.0 1095.6,462.0 1095.6,515.0 1093.6,519.2 1092.0,520.0 1090.4,519.2 1088.4,515.0" fill="#82847c" />
<rect x="1088.4" y="462.0" width="1.1" height="53.0" fill="#4a4a48" />
<rect x="1094.2" y="462.0" width="1.4" height="53.0" fill="#666664" />
<rect x="1092.5" y="462.0" width="1.0" height="54.0" fill="#50504e" />
<rect x="1093.6" y="462.0" width="1.2" height="53.5" fill="#969696" />
<polygon points="1097.4,462.0 1104.6,462.0 1104.6,503.0 1102.6,507.2 1101.0,508.0 1099.4,507.2 1097.4,503.0" fill="#82847c" />
<rect x="1097.4" y="462.0" width="1.1" height="41.0" fill="#4a4a48" />
<rect x="1103.2" y="462.0" width="1.4" height="41.0" fill="#666664" />
<rect x="1101.5" y="462.0" width="1.0" height="42.0" fill="#50504e" />
<rect x="1102.6" y="462.0" width="1.2" height="41.5" fill="#969696" />
<polygon points="1107.4,462.0 1114.6,462.0 1114.6,518.6 1112.6,522.8 1111.0,523.6 1109.4,522.8 1107.4,518.6" fill="#82847c" />
<rect x="1107.4" y="462.0" width="1.1" height="56.6" fill="#4a4a48" />
<rect x="1113.2" y="462.0" width="1.4" height="56.6" fill="#666664" />
<rect x="1111.5" y="462.0" width="1.0" height="57.6" fill="#50504e" />
<rect x="1112.6" y="462.0" width="1.2" height="57.1" fill="#969696" />
<polygon points="1117.4,462.0 1124.6,462.0 1124.6,501.0 1122.6,505.2 1121.0,506.0 1119.4,505.2 1117.4,501.0" fill="#82847c" />
<rect x="1117.4" y="462.0" width="1.1" height="39.0" fill="#4a4a48" />
<rect x="1123.2" y="462.0" width="1.4" height="39.0" fill="#666664" />
<rect x="1121.5" y="462.0" width="1.0" height="40.0" fill="#50504e" />
<rect x="1122.6" y="462.0" width="1.2" height="39.5" fill="#969696" />
<polygon points="1127.8,462.0 1135.0,462.0 1135.0,522.3 1133.0,526.5 1131.4,527.3 1129.8,526.5 1127.8,522.3" fill="#82847c" />
<rect x="1127.8" y="462.0" width="1.1" height="60.3" fill="#4a4a48" />
<rect x="1133.6" y="462.0" width="1.4" height="60.3" fill="#666664" />
<rect x="1131.9" y="462.0" width="1.0" height="61.3" fill="#50504e" />
<rect x="1133.0" y="462.0" width="1.2" height="60.8" fill="#969696" />
<polygon points="1137.4,462.0 1144.6,462.0 1144.6,496.6 1142.6,500.8 1141.0,501.6 1139.4,500.8 1137.4,496.6" fill="#82847c" />
<rect x="1137.4" y="462.0" width="1.1" height="34.6" fill="#4a4a48" />
<rect x="1143.2" y="462.0" width="1.4" height="34.6" fill="#666664" />
<rect x="1141.5" y="462.0" width="1.0" height="35.6" fill="#50504e" />
<rect x="1142.6" y="462.0" width="1.2" height="35.1" fill="#969696" />
<polygon points="1149.8,462.0 1157.0,462.0 1157.0,524.8 1155.0,529.0 1153.4,529.8 1151.8,529.0 1149.8,524.8" fill="#82847c" />
<rect x="1149.8" y="462.0" width="1.1" height="62.8" fill="#4a4a48" />
<rect x="1155.6" y="462.0" width="1.4" height="62.8" fill="#666664" />
<rect x="1153.9" y="462.0" width="1.0" height="63.8" fill="#50504e" />
<rect x="1155.0" y="462.0" width="1.2" height="63.3" fill="#969696" />
<polygon points="1160.8,462.0 1168.0,462.0 1168.0,496.6 1166.0,500.8 1164.4,501.6 1162.8,500.8 1160.8,496.6" fill="#82847c" />
<rect x="1160.8" y="462.0" width="1.1" height="34.6" fill="#4a4a48" />
<rect x="1166.6" y="462.0" width="1.4" height="34.6" fill="#666664" />
<rect x="1164.9" y="462.0" width="1.0" height="35.6" fill="#50504e" />
<rect x="1166.0" y="462.0" width="1.2" height="35.1" fill="#969696" />
<polygon points="1173.1,462.0 1180.3,462.0 1180.3,529.7 1178.3,533.9 1176.7,534.7 1175.1,533.9 1173.1,529.7" fill="#82847c" />
<rect x="1173.1" y="462.0" width="1.1" height="67.7" fill="#4a4a48" />
<rect x="1178.9" y="462.0" width="1.4" height="67.7" fill="#666664" />
<rect x="1177.2" y="462.0" width="1.0" height="68.7" fill="#50504e" />
<rect x="1178.3" y="462.0" width="1.2" height="68.2" fill="#969696" />
<polygon points="1181.4,462.0 1188.6,462.0 1188.6,493.0 1186.6,497.2 1185.0,498.0 1183.4,497.2 1181.4,493.0" fill="#82847c" />
<rect x="1181.4" y="462.0" width="1.1" height="31.0" fill="#4a4a48" />
<rect x="1187.2" y="462.0" width="1.4" height="31.0" fill="#666664" />
<rect x="1185.5" y="462.0" width="1.0" height="32.0" fill="#50504e" />
<rect x="1186.6" y="462.0" width="1.2" height="31.5" fill="#969696" />
<polygon points="1197.3,455.0 1201.8,455.0 1201.8,475.4 1200.6,479.6 1199.6,480.4 1198.6,479.6 1197.3,475.4" fill="#82847c" />
<rect x="1197.3" y="455.0" width="1.1" height="20.4" fill="#4a4a48" />
<rect x="1200.4" y="455.0" width="1.4" height="20.4" fill="#666664" />
<rect x="1199.9" y="455.0" width="1.0" height="21.4" fill="#50504e" />
<rect x="1200.6" y="455.0" width="1.2" height="20.9" fill="#969696" />
<polygon points="1204.2,455.0 1208.7,455.0 1208.7,478.0 1207.4,482.2 1206.4,483.0 1205.4,482.2 1204.2,478.0" fill="#82847c" />
<rect x="1204.2" y="455.0" width="1.1" height="23.0" fill="#4a4a48" />
<rect x="1207.3" y="455.0" width="1.4" height="23.0" fill="#666664" />
<rect x="1206.8" y="455.0" width="1.0" height="24.0" fill="#50504e" />
<rect x="1207.4" y="455.0" width="1.2" height="23.5" fill="#969696" />
<polygon points="1212.0,455.0 1216.5,455.0 1216.5,471.7 1215.3,475.9 1214.2,476.7 1213.2,475.9 1212.0,471.7" fill="#82847c" />
<rect x="1212.0" y="455.0" width="1.1" height="16.7" fill="#4a4a48" />
<rect x="1215.1" y="455.0" width="1.4" height="16.7" fill="#666664" />
<rect x="1214.6" y="455.0" width="1.0" height="17.7" fill="#50504e" />
<rect x="1215.3" y="455.0" width="1.2" height="17.2" fill="#969696" />
<polygon points="1220.6,455.0 1225.1,455.0 1225.1,472.8 1223.8,477.0 1222.8,477.8 1221.8,477.0 1220.6,472.8" fill="#82847c" />
<rect x="1220.6" y="455.0" width="1.1" height="17.8" fill="#4a4a48" />
<rect x="1223.7" y="455.0" width="1.4" height="17.8" fill="#666664" />
<rect x="1223.2" y="455.0" width="1.0" height="18.8" fill="#50504e" />
<rect x="1223.8" y="455.0" width="1.2" height="18.3" fill="#969696" />
<polygon points="1229.1,455.0 1233.6,455.0 1233.6,471.6 1232.4,475.8 1231.4,476.6 1230.3,475.8 1229.1,471.6" fill="#82847c" />
<rect x="1229.1" y="455.0" width="1.1" height="16.6" fill="#4a4a48" />
<rect x="1232.2" y="455.0" width="1.4" height="16.6" fill="#666664" />
<rect x="1231.7" y="455.0" width="1.0" height="17.6" fill="#50504e" />
<rect x="1232.4" y="455.0" width="1.2" height="17.1" fill="#969696" />
<polygon points="1235.8,455.0 1240.3,455.0 1240.3,472.7 1239.0,476.9 1238.0,477.7 1237.0,476.9 1235.8,472.7" fill="#82847c" />
<rect x="1235.8" y="455.0" width="1.1" height="17.7" fill="#4a4a48" />
<rect x="1238.9" y="455.0" width="1.4" height="17.7" fill="#666664" />
<rect x="1238.3" y="455.0" width="1.0" height="18.7" fill="#50504e" />
<rect x="1239.0" y="455.0" width="1.2" height="18.2" fill="#969696" />
<polygon points="1244.2,455.0 1248.7,455.0 1248.7,475.0 1247.4,479.2 1246.4,480.0 1245.4,479.2 1244.2,475.0" fill="#82847c" />
<rect x="1244.2" y="455.0" width="1.1" height="20.0" fill="#4a4a48" />
<rect x="1247.3" y="455.0" width="1.4" height="20.0" fill="#666664" />
<rect x="1246.7" y="455.0" width="1.0" height="21.0" fill="#50504e" />
<rect x="1247.4" y="455.0" width="1.2" height="20.5" fill="#969696" />
<polygon points="1251.9,455.0 1256.4,455.0 1256.4,480.6 1255.1,484.8 1254.1,485.6 1253.1,484.8 1251.9,480.6" fill="#82847c" />
<rect x="1251.9" y="455.0" width="1.1" height="25.6" fill="#4a4a48" />
<rect x="1255.0" y="455.0" width="1.4" height="25.6" fill="#666664" />
<rect x="1254.4" y="455.0" width="1.0" height="26.6" fill="#50504e" />
<rect x="1255.1" y="455.0" width="1.2" height="26.1" fill="#969696" />
<polygon points="1262.2,455.0 1266.7,455.0 1266.7,472.6 1265.5,476.8 1264.5,477.6 1263.4,476.8 1262.2,472.6" fill="#82847c" />
<rect x="1262.2" y="455.0" width="1.1" height="17.6" fill="#4a4a48" />
<rect x="1265.3" y="455.0" width="1.4" height="17.6" fill="#666664" />
<rect x="1264.8" y="455.0" width="1.0" height="18.6" fill="#50504e" />
<rect x="1265.5" y="455.0" width="1.2" height="18.1" fill="#969696" />
<polygon points="1268.8,455.0 1273.3,455.0 1273.3,474.8 1272.0,479.0 1271.0,479.8 1270.0,479.0 1268.8,474.8" fill="#82847c" />
<rect x="1268.8" y="455.0" width="1.1" height="19.8" fill="#4a4a48" />
<rect x="1271.9" y="455.0" width="1.4" height="19.8" fill="#666664" />
<rect x="1271.3" y="455.0" width="1.0" height="20.8" fill="#50504e" />
<rect x="1272.0" y="455.0" width="1.2" height="20.3" fill="#969696" />
<polygon points="1277.2,455.0 1281.7,455.0 1281.7,472.4 1280.5,476.6 1279.5,477.4 1278.4,476.6 1277.2,472.4" fill="#82847c" />
<rect x="1277.2" y="455.0" width="1.1" height="17.4" fill="#4a4a48" />
<rect x="1280.3" y="455.0" width="1.4" height="17.4" fill="#666664" />
<rect x="1279.8" y="455.0" width="1.0" height="18.4" fill="#50504e" />
<rect x="1280.5" y="455.0" width="1.2" height="17.9" fill="#969696" />
<polygon points="1287.1,455.0 1291.6,455.0 1291.6,481.9 1290.4,486.1 1289.4,486.9 1288.4,486.1 1287.1,481.9" fill="#82847c" />
<rect x="1287.1" y="455.0" width="1.1" height="26.9" fill="#4a4a48" />
<rect x="1290.2" y="455.0" width="1.4" height="26.9" fill="#666664" />
<rect x="1289.7" y="455.0" width="1.0" height="27.9" fill="#50504e" />
<rect x="1290.4" y="455.0" width="1.2" height="27.4" fill="#969696" />
<polygon points="1293.6,455.0 1298.1,455.0 1298.1,476.3 1296.9,480.5 1295.9,481.3 1294.9,480.5 1293.6,476.3" fill="#82847c" />
<rect x="1293.6" y="455.0" width="1.1" height="21.3" fill="#4a4a48" />
<rect x="1296.7" y="455.0" width="1.4" height="21.3" fill="#666664" />
<rect x="1296.2" y="455.0" width="1.0" height="22.3" fill="#50504e" />
<rect x="1296.9" y="455.0" width="1.2" height="21.8" fill="#969696" />
<polygon points="1300.1,455.0 1304.6,455.0 1304.6,472.1 1303.4,476.3 1302.3,477.1 1301.3,476.3 1300.1,472.1" fill="#82847c" />
<rect x="1300.1" y="455.0" width="1.1" height="17.1" fill="#4a4a48" />
<rect x="1303.2" y="455.0" width="1.4" height="17.1" fill="#666664" />
<rect x="1302.7" y="455.0" width="1.0" height="18.1" fill="#50504e" />
<rect x="1303.4" y="455.0" width="1.2" height="17.6" fill="#969696" />
<polygon points="1309.1,455.0 1313.6,455.0 1313.6,473.9 1312.4,478.1 1311.4,478.9 1310.4,478.1 1309.1,473.9" fill="#82847c" />
<rect x="1309.1" y="455.0" width="1.1" height="18.9" fill="#4a4a48" />
<rect x="1312.2" y="455.0" width="1.4" height="18.9" fill="#666664" />
<rect x="1311.7" y="455.0" width="1.0" height="19.9" fill="#50504e" />
<rect x="1312.4" y="455.0" width="1.2" height="19.4" fill="#969696" />
<polygon points="1319.1,455.0 1323.6,455.0 1323.6,472.8 1322.3,477.0 1321.3,477.8 1320.3,477.0 1319.1,472.8" fill="#82847c" />
<rect x="1319.1" y="455.0" width="1.1" height="17.8" fill="#4a4a48" />
<rect x="1322.2" y="455.0" width="1.4" height="17.8" fill="#666664" />
<rect x="1321.7" y="455.0" width="1.0" height="18.8" fill="#50504e" />
<rect x="1322.3" y="455.0" width="1.2" height="18.3" fill="#969696" />
<polygon points="1323.8,455.0 1328.3,455.0 1328.3,481.5 1327.1,485.7 1326.1,486.5 1325.1,485.7 1323.8,481.5" fill="#82847c" />
<rect x="1323.8" y="455.0" width="1.1" height="26.5" fill="#4a4a48" />
<rect x="1326.9" y="455.0" width="1.4" height="26.5" fill="#666664" />
<rect x="1326.4" y="455.0" width="1.0" height="27.5" fill="#50504e" />
<rect x="1327.1" y="455.0" width="1.2" height="27.0" fill="#969696" />
<polygon points="1194.5,471.7 1201.5,471.7 1201.5,495.0 1199.6,499.2 1198.0,500.0 1196.4,499.2 1194.5,495.0" fill="#82847c" />
<rect x="1194.5" y="471.7" width="1.1" height="23.3" fill="#4a4a48" />
<rect x="1200.1" y="471.7" width="1.4" height="23.3" fill="#666664" />
<rect x="1198.5" y="471.7" width="1.0" height="24.3" fill="#50504e" />
<rect x="1199.6" y="471.7" width="1.2" height="23.8" fill="#969696" />
<polygon points="1205.5,470.2 1212.5,470.2 1212.5,485.6 1210.6,489.8 1209.0,490.6 1207.4,489.8 1205.5,485.6" fill="#82847c" />
<rect x="1205.5" y="470.2" width="1.1" height="15.4" fill="#4a4a48" />
<rect x="1211.1" y="470.2" width="1.4" height="15.4" fill="#666664" />
<rect x="1209.5" y="470.2" width="1.0" height="16.4" fill="#50504e" />
<rect x="1210.6" y="470.2" width="1.2" height="15.9" fill="#969696" />
<polygon points="1216.5,468.8 1223.5,468.8 1223.5,487.5 1221.6,491.7 1220.0,492.5 1218.4,491.7 1216.5,487.5" fill="#82847c" />
<rect x="1216.5" y="468.8" width="1.1" height="18.7" fill="#4a4a48" />
<rect x="1222.1" y="468.8" width="1.4" height="18.7" fill="#666664" />
<rect x="1220.5" y="468.8" width="1.0" height="19.7" fill="#50504e" />
<rect x="1221.6" y="468.8" width="1.2" height="19.2" fill="#969696" />
<polygon points="1227.5,467.3 1234.5,467.3 1234.5,482.0 1232.6,486.2 1231.0,487.0 1229.4,486.2 1227.5,482.0" fill="#82847c" />
<rect x="1227.5" y="467.3" width="1.1" height="14.7" fill="#4a4a48" />
<rect x="1233.1" y="467.3" width="1.4" height="14.7" fill="#666664" />
<rect x="1231.5" y="467.3" width="1.0" height="15.7" fill="#50504e" />
<rect x="1232.6" y="467.3" width="1.2" height="15.2" fill="#969696" />
<polygon points="1235.3,466.2 1242.3,466.2 1242.3,489.3 1240.4,493.5 1238.8,494.3 1237.2,493.5 1235.3,489.3" fill="#82847c" />
<rect x="1235.3" y="466.2" width="1.1" height="23.1" fill="#4a4a48" />
<rect x="1240.9" y="466.2" width="1.4" height="23.1" fill="#666664" />
<rect x="1239.3" y="466.2" width="1.0" height="24.1" fill="#50504e" />
<rect x="1240.4" y="466.2" width="1.2" height="23.6" fill="#969696" />
<polygon points="1253.5,463.7 1260.5,463.7 1260.5,491.7 1258.6,495.9 1257.0,496.7 1255.4,495.9 1253.5,491.7" fill="#82847c" />
<rect x="1253.5" y="463.7" width="1.1" height="28.0" fill="#4a4a48" />
<rect x="1259.1" y="463.7" width="1.4" height="28.0" fill="#666664" />
<rect x="1257.5" y="463.7" width="1.0" height="29.0" fill="#50504e" />
<rect x="1258.6" y="463.7" width="1.2" height="28.5" fill="#969696" />
<polygon points="1258.5,463.1 1265.5,463.1 1265.5,479.5 1263.6,483.7 1262.0,484.5 1260.4,483.7 1258.5,479.5" fill="#82847c" />
<rect x="1258.5" y="463.1" width="1.1" height="16.4" fill="#4a4a48" />
<rect x="1264.1" y="463.1" width="1.4" height="16.4" fill="#666664" />
<rect x="1262.5" y="463.1" width="1.0" height="17.4" fill="#50504e" />
<rect x="1263.6" y="463.1" width="1.2" height="16.9" fill="#969696" />
<polygon points="1273.2,461.1 1280.2,461.1 1280.2,494.0 1278.3,498.2 1276.7,499.0 1275.1,498.2 1273.2,494.0" fill="#82847c" />
<rect x="1273.2" y="461.1" width="1.1" height="32.9" fill="#4a4a48" />
<rect x="1278.8" y="461.1" width="1.4" height="32.9" fill="#666664" />
<rect x="1277.2" y="461.1" width="1.0" height="33.9" fill="#50504e" />
<rect x="1278.3" y="461.1" width="1.2" height="33.4" fill="#969696" />
<polygon points="1292.8,458.4 1299.8,458.4 1299.8,496.6 1297.9,500.8 1296.3,501.6 1294.7,500.8 1292.8,496.6" fill="#82847c" />
<rect x="1292.8" y="458.4" width="1.1" height="38.2" fill="#4a4a48" />
<rect x="1298.4" y="458.4" width="1.4" height="38.2" fill="#666664" />
<rect x="1296.8" y="458.4" width="1.0" height="39.2" fill="#50504e" />
<rect x="1297.9" y="458.4" width="1.2" height="38.7" fill="#969696" />
<polygon points="1306.3,456.6 1313.3,456.6 1313.3,478.0 1311.4,482.2 1309.8,483.0 1308.2,482.2 1306.3,478.0" fill="#82847c" />
<rect x="1306.3" y="456.6" width="1.1" height="21.4" fill="#4a4a48" />
<rect x="1311.9" y="456.6" width="1.4" height="21.4" fill="#666664" />
<rect x="1310.3" y="456.6" width="1.0" height="22.4" fill="#50504e" />
<rect x="1311.4" y="456.6" width="1.2" height="21.9" fill="#969696" />
<polygon points="1313.5,455.6 1320.5,455.6 1320.5,499.0 1318.6,503.2 1317.0,504.0 1315.4,503.2 1313.5,499.0" fill="#82847c" />
<rect x="1313.5" y="455.6" width="1.1" height="43.4" fill="#4a4a48" />
<rect x="1319.1" y="455.6" width="1.4" height="43.4" fill="#666664" />
<rect x="1317.5" y="455.6" width="1.0" height="44.4" fill="#50504e" />
<rect x="1318.6" y="455.6" width="1.2" height="43.9" fill="#969696" />
<polygon points="1323.5,454.3 1330.5,454.3 1330.5,479.5 1328.6,483.7 1327.0,484.5 1325.4,483.7 1323.5,479.5" fill="#82847c" />
<rect x="1323.5" y="454.3" width="1.1" height="25.2" fill="#4a4a48" />
<rect x="1329.1" y="454.3" width="1.4" height="25.2" fill="#666664" />
<rect x="1327.5" y="454.3" width="1.0" height="26.2" fill="#50504e" />
<rect x="1328.6" y="454.3" width="1.2" height="25.7" fill="#969696" />
<polygon points="1333.2,442.0 1340.2,442.0 1340.2,495.0 1338.3,499.2 1336.7,500.0 1335.1,499.2 1333.2,495.0" fill="#82847c" />
<rect x="1333.2" y="442.0" width="1.1" height="53.0" fill="#4a4a48" />
<rect x="1338.8" y="442.0" width="1.4" height="53.0" fill="#666664" />
<rect x="1337.2" y="442.0" width="1.0" height="54.0" fill="#50504e" />
<rect x="1338.3" y="442.0" width="1.2" height="53.5" fill="#969696" />
<polygon points="1341.8,442.0 1348.8,442.0 1348.8,481.0 1346.9,485.2 1345.3,486.0 1343.7,485.2 1341.8,481.0" fill="#82847c" />
<rect x="1341.8" y="442.0" width="1.1" height="39.0" fill="#4a4a48" />
<rect x="1347.4" y="442.0" width="1.4" height="39.0" fill="#666664" />
<rect x="1345.8" y="442.0" width="1.0" height="40.0" fill="#50504e" />
<rect x="1346.9" y="442.0" width="1.2" height="39.5" fill="#969696" />
<polygon points="1351.5,442.0 1358.5,442.0 1358.5,490.0 1356.6,494.2 1355.0,495.0 1353.4,494.2 1351.5,490.0" fill="#82847c" />
<rect x="1351.5" y="442.0" width="1.1" height="48.0" fill="#4a4a48" />
<rect x="1357.1" y="442.0" width="1.4" height="48.0" fill="#666664" />
<rect x="1355.5" y="442.0" width="1.0" height="49.0" fill="#50504e" />
<rect x="1356.6" y="442.0" width="1.2" height="48.5" fill="#969696" />
<polygon points="1360.1,442.0 1367.1,442.0 1367.1,483.0 1365.2,487.2 1363.6,488.0 1362.0,487.2 1360.1,483.0" fill="#82847c" />
<rect x="1360.1" y="442.0" width="1.1" height="41.0" fill="#4a4a48" />
<rect x="1365.7" y="442.0" width="1.4" height="41.0" fill="#666664" />
<rect x="1364.1" y="442.0" width="1.0" height="42.0" fill="#50504e" />
<rect x="1365.2" y="442.0" width="1.2" height="41.5" fill="#969696" />
<polygon points="1380.2,442.0 1387.2,442.0 1387.2,485.0 1385.3,489.2 1383.7,490.0 1382.1,489.2 1380.2,485.0" fill="#82847c" />
<rect x="1380.2" y="442.0" width="1.1" height="43.0" fill="#4a4a48" />
<rect x="1385.8" y="442.0" width="1.4" height="43.0" fill="#666664" />
<rect x="1384.2" y="442.0" width="1.0" height="44.0" fill="#50504e" />
<rect x="1385.3" y="442.0" width="1.2" height="43.5" fill="#969696" />
<polygon points="918.0,309.0 1050.0,290.0 1189.0,276.0 1189.0,470.0 960.0,470.0 918.0,440.0" fill="#464e50" />
<polygon points="916.0,293.5 957.0,298.5 975.0,301.0 975.0,318.0 916.0,318.0" fill="#945942" />
<line x1="915.0" y1="293.0" x2="958.0" y2="298.0" stroke="#343434" stroke-width="1.00" />
<polygon points="960.0,303.0 1059.0,290.0 1059.0,318.0 960.0,318.0" fill="#968476" />
<polygon points="1000.0,299.0 1034.0,294.5 1034.0,318.0 1000.0,318.0" fill="#808683" />
<rect x="1003.0" y="311.0" width="30.0" height="7.0" fill="#a19e8e" />
<polygon points="1066.0,271.0 1189.5,253.0 1189.5,275.0 1066.0,291.0" fill="#9a9a8c" />
<line x1="1057.0" y1="272.7" x2="1192.0" y2="249.5" stroke="#363636" stroke-width="1.00" />
<polygon points="1050.0,292.0 1189.0,278.0 1189.0,326.0 1102.0,326.0 1102.0,317.0 1050.0,317.0" fill="#464e50" />
<rect x="1062.0" y="295.0" width="13.0" height="32.0" fill="#968476" />
<rect x="1089.0" y="292.0" width="4.0" height="35.0" fill="#626a6a" />
<rect x="1106.0" y="290.1" width="5.0" height="36.9" fill="#646c6c" />
<rect x="1128.0" y="287.7" width="6.0" height="39.3" fill="#626a68" />
<rect x="1148.0" y="285.5" width="16.0" height="41.5" fill="#968476" />
<rect x="1164.0" y="283.8" width="9.0" height="43.2" fill="#98988a" />
<rect x="1176.0" y="283.0" width="11.0" height="36.0" fill="#545d60" />
<rect x="1152.0" y="298.0" width="16.0" height="28.0" fill="#9e9e8e" />
<line x1="1156.0" y1="299.0" x2="1156.0" y2="326.0" stroke="#5d5d53" stroke-width="0.80" />
<line x1="1160.0" y1="299.0" x2="1160.0" y2="326.0" stroke="#5d5d53" stroke-width="0.80" />
<line x1="1164.0" y1="299.0" x2="1164.0" y2="326.0" stroke="#5d5d53" stroke-width="0.80" />
<rect x="1102.0" y="312.0" width="48.0" height="12.0" fill="#4c5053" />
<rect x="1108.0" y="314.0" width="6.0" height="8.0" fill="#131317" />
<rect x="1122.0" y="313.0" width="10.0" height="9.0" fill="#737378" />
<polygon points="1102.0,326.0 1189.0,326.0 1189.0,333.0 1102.0,337.0" fill="#838888" />
<line x1="1102.0" y1="326.5" x2="1189.0" y2="326.5" stroke="#151446" stroke-width="1.20" stroke-dasharray="5 4"/>
<rect x="1102.0" y="337.0" width="87.0" height="41.0" fill="#3e4648" />
<rect x="1108.0" y="337.0" width="6.2" height="41.0" fill="#8c8e80" />
<rect x="1116.0" y="337.0" width="2.5" height="41.0" fill="#5a6264" />
<rect x="1121.0" y="337.0" width="2.0" height="41.0" fill="#566062" />
<rect x="1138.6" y="337.0" width="6.4" height="41.0" fill="#8c8e80" />
<rect x="1147.0" y="337.0" width="3.0" height="41.0" fill="#5a6264" />
<rect x="1133.0" y="337.0" width="3.0" height="41.0" fill="#525a5c" />
<rect x="1158.0" y="328.0" width="14.0" height="50.0" fill="#96857b" />
<rect x="1173.0" y="336.0" width="15.0" height="42.0" fill="#7d8583" />
<rect x="1102.0" y="366.0" width="54.0" height="12.0" fill="#565453" />
<rect x="1104.0" y="366.0" width="4.0" height="6.0" fill="#121217" />
<rect x="1111.0" y="366.0" width="4.0" height="6.0" fill="#121217" />
<rect x="1118.0" y="366.0" width="4.0" height="6.0" fill="#121217" />
<rect x="1125.0" y="366.0" width="4.0" height="6.0" fill="#121217" />
<rect x="1132.0" y="366.0" width="4.0" height="6.0" fill="#121217" />
<rect x="1139.0" y="366.0" width="4.0" height="6.0" fill="#121217" />
<rect x="1146.0" y="366.0" width="4.0" height="6.0" fill="#121217" />
<rect x="1153.0" y="366.0" width="4.0" height="6.0" fill="#121217" />
<rect x="1170.0" y="364.0" width="3.0" height="14.0" fill="#141417" />
<rect x="1176.0" y="368.0" width="10.0" height="9.0" fill="#969388" />
<rect x="1102.0" y="378.0" width="87.0" height="8.5" fill="#939490" />
<line x1="1102.0" y1="382.0" x2="1189.0" y2="382.0" stroke="#62696a" stroke-width="1.00" />
<rect x="1102.0" y="387.0" width="87.0" height="30.0" fill="#404a4c" />
<rect x="1102.0" y="388.0" width="4.0" height="29.0" fill="#887c64" />
<rect x="1107.0" y="388.0" width="6.0" height="29.0" fill="#909284" />
<rect x="1114.0" y="388.0" width="2.0" height="29.0" fill="#5e686a" />
<rect x="1126.7" y="388.0" width="6.5" height="29.0" fill="#8e9082" />
<rect x="1134.0" y="388.0" width="2.5" height="29.0" fill="#5e686a" />
<rect x="1159.0" y="388.0" width="7.0" height="29.0" fill="#8e9082" />
<rect x="1143.0" y="388.0" width="2.5" height="29.0" fill="#6e5a54" />
<rect x="1155.0" y="388.0" width="3.0" height="29.0" fill="#6e564e" />
<rect x="1173.0" y="388.0" width="11.0" height="29.0" fill="#725c56" />
<rect x="1148.0" y="388.0" width="4.0" height="29.0" fill="#56606a" />
<rect x="1102.0" y="417.0" width="87.0" height="11.0" fill="#80807a" />
<rect x="1109.0" y="416.5" width="4.6" height="7.0" fill="#0e0e12" />
<rect x="1115.0" y="416.5" width="4.6" height="7.0" fill="#0e0e12" />
<rect x="1121.0" y="416.5" width="4.6" height="7.0" fill="#0e0e12" />
<rect x="1133.0" y="416.5" width="4.6" height="7.0" fill="#0e0e12" />
<rect x="1139.0" y="416.5" width="4.6" height="7.0" fill="#0e0e12" />
<rect x="1145.0" y="416.5" width="4.6" height="7.0" fill="#0e0e12" />
<rect x="1157.0" y="416.5" width="4.6" height="7.0" fill="#0e0e12" />
<rect x="1163.0" y="416.5" width="4.6" height="7.0" fill="#0e0e12" />
<rect x="1169.0" y="416.5" width="4.6" height="7.0" fill="#0e0e12" />
<polygon points="1102.0,428.0 1189.0,429.5 1189.0,436.0 1102.0,435.0" fill="#737589" />
<line x1="1102.0" y1="428.5" x2="1189.0" y2="430.0" stroke="#151446" stroke-width="1.20" stroke-dasharray="4 5"/>
<line x1="1102.0" y1="431.5" x2="1189.0" y2="433.0" stroke="#6e543b" stroke-width="0.80" />
<polygon points="1102.0,435.0 1189.0,436.0 1189.0,457.5 1102.0,454.5" fill="#777d7b" />
<rect x="1103.4" y="436.0" width="10.5" height="5.4" fill="#7d817d" />
<rect x="1114.7" y="436.3" width="12.7" height="5.4" fill="#787e7b" />
<rect x="1128.2" y="436.5" width="11.0" height="5.4" fill="#909389" />
<rect x="1139.9" y="436.8" width="10.8" height="5.4" fill="#888b83" />
<rect x="1151.6" y="437.0" width="10.0" height="5.4" fill="#696f6d" />
<rect x="1162.4" y="437.2" width="8.6" height="5.4" fill="#727875" />
<rect x="1171.8" y="437.4" width="10.0" height="5.4" fill="#888b83" />
<rect x="1182.6" y="437.6" width="4.6" height="5.4" fill="#787e7b" />
<rect x="1105.8" y="442.4" width="8.1" height="5.4" fill="#727875" />
<rect x="1114.7" y="442.6" width="8.1" height="5.4" fill="#696f6d" />
<rect x="1123.6" y="442.7" width="9.5" height="5.4" fill="#909389" />
<rect x="1134.0" y="442.9" width="11.2" height="5.4" fill="#909389" />
<rect x="1146.0" y="443.2" width="8.2" height="5.4" fill="#696f6d" />
<rect x="1155.0" y="443.4" width="7.5" height="5.4" fill="#888b83" />
<rect x="1163.2" y="443.5" width="7.4" height="5.4" fill="#888b83" />
<rect x="1171.4" y="443.7" width="8.8" height="5.4" fill="#696f6d" />
<rect x="1181.0" y="443.9" width="6.2" height="5.4" fill="#787e7b" />
<rect x="1106.3" y="448.7" width="12.7" height="5.4" fill="#787e7b" />
<rect x="1119.8" y="449.0" width="11.6" height="5.4" fill="#696f6d" />
<rect x="1132.2" y="449.2" width="9.9" height="5.4" fill="#6c7372" />
<rect x="1142.8" y="449.4" width="12.5" height="5.4" fill="#909389" />
<rect x="1156.1" y="449.7" width="7.4" height="5.4" fill="#787e7b" />
<rect x="1164.3" y="449.8" width="8.5" height="5.4" fill="#727875" />
<rect x="1173.6" y="450.0" width="9.8" height="5.4" fill="#727875" />
<rect x="1184.3" y="450.2" width="2.9" height="5.4" fill="#787e7b" />
<polygon points="1102.0,454.0 1189.0,457.0 1189.0,461.5 1102.0,458.0" fill="#6c6c7e" />
<polygon points="1102.0,458.0 1189.0,461.5 1189.0,463.0 1102.0,459.5" fill="#187070" />
<polygon points="1102.0,459.5 1189.0,463.0 1189.0,472.0 1102.0,465.0" fill="#999c94" />
<line x1="1104.0" y1="462.6" x2="1104.0" y2="465.6" stroke="#2d7878" stroke-width="0.70" />
<line x1="1108.0" y1="462.8" x2="1108.0" y2="465.8" stroke="#2d7878" stroke-width="0.70" />
<line x1="1112.0" y1="462.9" x2="1112.0" y2="465.9" stroke="#2d7878" stroke-width="0.70" />
<line x1="1116.0" y1="463.1" x2="1116.0" y2="466.1" stroke="#2d7878" stroke-width="0.70" />
<line x1="1120.0" y1="463.3" x2="1120.0" y2="466.3" stroke="#2d7878" stroke-width="0.70" />
<line x1="1124.0" y1="463.5" x2="1124.0" y2="466.5" stroke="#2d7878" stroke-width="0.70" />
<line x1="1128.0" y1="463.7" x2="1128.0" y2="466.7" stroke="#2d7878" stroke-width="0.70" />
<line x1="1132.0" y1="463.9" x2="1132.0" y2="466.9" stroke="#2d7878" stroke-width="0.70" />
<line x1="1136.0" y1="464.0" x2="1136.0" y2="467.0" stroke="#2d7878" stroke-width="0.70" />
<line x1="1140.0" y1="464.2" x2="1140.0" y2="467.2" stroke="#2d7878" stroke-width="0.70" />
<line x1="1144.0" y1="464.4" x2="1144.0" y2="467.4" stroke="#2d7878" stroke-width="0.70" />
<line x1="1148.0" y1="464.6" x2="1148.0" y2="467.6" stroke="#2d7878" stroke-width="0.70" />
<line x1="1152.0" y1="464.8" x2="1152.0" y2="467.8" stroke="#2d7878" stroke-width="0.70" />
<line x1="1156.0" y1="464.9" x2="1156.0" y2="467.9" stroke="#2d7878" stroke-width="0.70" />
<line x1="1160.0" y1="465.1" x2="1160.0" y2="468.1" stroke="#2d7878" stroke-width="0.70" />
<line x1="1164.0" y1="465.3" x2="1164.0" y2="468.3" stroke="#2d7878" stroke-width="0.70" />
<line x1="1168.0" y1="465.5" x2="1168.0" y2="468.5" stroke="#2d7878" stroke-width="0.70" />
<line x1="1172.0" y1="465.6" x2="1172.0" y2="468.6" stroke="#2d7878" stroke-width="0.70" />
<line x1="1176.0" y1="465.8" x2="1176.0" y2="468.8" stroke="#2d7878" stroke-width="0.70" />
<line x1="1180.0" y1="466.0" x2="1180.0" y2="469.0" stroke="#2d7878" stroke-width="0.70" />
<line x1="1184.0" y1="466.2" x2="1184.0" y2="469.2" stroke="#2d7878" stroke-width="0.70" />
<line x1="1102.0" y1="461.0" x2="1189.0" y2="466.0" stroke="#7d6d53" stroke-width="1.00" />
<polygon points="1102.0,465.0 1189.0,472.0 1189.0,474.5 1102.0,467.0" fill="#99936d" />
<polygon points="1102.0,467.0 1189.0,474.5 1189.0,476.5 1102.0,469.0" fill="#343432" />
<line x1="1102.0" y1="458.7" x2="1189.0" y2="462.2" stroke="#151446" stroke-width="1.00" stroke-dasharray="4 4"/>
<polygon points="918.0,308.4 1050.0,288.7 1188.5,272.5 1188.5,277.3 1050.0,292.5 918.0,311.8" fill="#757b7d" />
<polyline points="918,308.400 1050,288.700 1188.500,272.500" fill="none" stroke="#151446" stroke-width="1.300" stroke-dasharray="4 3.500"/>
<polyline points="918,311.800 1050,292.500 1188.500,277.300" fill="none" stroke="#151446" stroke-width="1.200" stroke-dasharray="4 3.500"/>
<rect x="957.5" y="278.0" width="3.0" height="40.0" fill="#151446" />
<rect x="994.0" y="302.0" width="2.0" height="16.0" fill="#151446" />
<rect x="997.5" y="302.0" width="2.0" height="16.0" fill="#151446" />
<rect x="1034.0" y="296.0" width="2.0" height="22.0" fill="#151446" />
<rect x="1038.0" y="296.0" width="1.5" height="22.0" fill="#151446" />
<rect x="1061.5" y="290.0" width="3.0" height="28.0" fill="#151446" />
<rect x="1146.8" y="279.0" width="3.0" height="48.0" fill="#151446" />
<rect x="1155.0" y="327.0" width="3.2" height="51.0" fill="#151446" />
<rect x="914.5" y="294.0" width="2.5" height="24.0" fill="#151446" />
<rect x="918.5" y="295.0" width="1.0" height="23.0" fill="#151446" />
<rect x="958.8" y="282.0" width="4.5" height="24.0" fill="#9c9c9c" />
<rect x="958.0" y="282.0" width="6.0" height="3.0" fill="#b5b5b5" />
<rect x="986.0" y="289.0" width="3.0" height="10.0" fill="#909090" />
<line x1="972.0" y1="246.5" x2="972.0" y2="296.0" stroke="#414141" stroke-width="1.00" />
<line x1="972.0" y1="293.0" x2="968.0" y2="299.0" stroke="#414141" stroke-width="1.00" />
<line x1="972.0" y1="293.0" x2="976.0" y2="299.0" stroke="#414141" stroke-width="1.00" />
<line x1="1024.5" y1="236.5" x2="1024.5" y2="273.0" stroke="#414141" stroke-width="1.00" />
<line x1="1032.4" y1="256.0" x2="1032.4" y2="286.0" stroke="#414141" stroke-width="1.00" />
<line x1="1205.7" y1="272.0" x2="1205.7" y2="293.0" stroke="#414141" stroke-width="1.00" />
<rect x="1008.0" y="288.0" width="12.0" height="4.0" fill="#898986" />
<rect x="1012.0" y="283.0" width="5.0" height="10.0" fill="#7a7a77" />
<ellipse cx="1017.800" cy="280" rx="3.400" ry="4" fill="#afafb5" stroke="#151446" stroke-width="1.400"/>
<circle cx="1026" cy="277" r="4.500" fill="#6f6f6d"/>
<line x1="1020.0" y1="284.0" x2="1032.0" y2="290.0" stroke="#4c4c4a" stroke-width="2.00" />
<rect x="1036.0" y="268.0" width="17.0" height="4.0" fill="#8c8c89" />
<rect x="1039.0" y="271.0" width="3.0" height="18.0" fill="#80807d" />
<rect x="1044.0" y="271.0" width="3.0" height="18.0" fill="#898986" />
<rect x="1049.0" y="271.0" width="3.0" height="18.0" fill="#80807d" />
<rect x="1046.0" y="263.0" width="4.0" height="6.0" fill="#838380" />
<ellipse cx="1041.500" cy="276.500" rx="2.800" ry="3.200" fill="#afafb5" stroke="#151446" stroke-width="1.300"/>
<rect x="1055.0" y="274.0" width="8.0" height="10.0" fill="#6d6d6c" />
<polygon points="1058.0,281.0 1066.0,279.0 1066.0,288.0 1058.0,290.0" fill="#686a6c" />
<path d="M1082 268.500q0-3.500 3.500-3.500h3v3h-2.500q-1 0-1 1v6h-3z" fill="#999996"/>
<rect x="1068.0" y="274.0" width="14.0" height="4.0" fill="#585c60" />
<line x1="1143.0" y1="267.5" x2="1159.0" y2="270.5" stroke="#262626" stroke-width="1.20" />
<line x1="1159.5" y1="255.0" x2="1159.5" y2="271.0" stroke="#262626" stroke-width="1.00" />
<rect x="1188.5" y="253.0" width="7.5" height="224.0" fill="#151446" />
<rect x="1191.5" y="318.0" width="2.2" height="7.0" fill="#a8a8a2" />
<rect x="1191.5" y="342.0" width="2.2" height="7.0" fill="#a8a8a2" />
<rect x="1191.5" y="372.0" width="2.2" height="7.0" fill="#a8a8a2" />
<rect x="1191.5" y="402.0" width="2.2" height="7.0" fill="#a8a8a2" />
<rect x="1191.5" y="440.0" width="2.2" height="7.0" fill="#a8a8a2" />
<rect x="1191.5" y="452.0" width="2.2" height="7.0" fill="#a8a8a2" />
<rect x="1191.5" y="464.0" width="2.2" height="7.0" fill="#a8a8a2" />
<rect x="1196.3" y="263.0" width="9.5" height="160.0" fill="#9c5e46" />
<rect x="1196.3" y="263.0" width="4.2" height="160.0" fill="#8a5038" />
<rect x="1200.3" y="263.0" width="1.0" height="160.0" fill="#3c241c" />
<rect x="1189.0" y="280.0" width="5.5" height="38.0" fill="#43346c" />
<rect x="1196.3" y="380.0" width="3.0" height="44.0" fill="#513443" />
<polygon points="1206.0,294.5 1333.0,281.0 1333.0,418.0 1206.0,418.0" fill="#999a8a" />
<line x1="1206.0" y1="294.5" x2="1333.0" y2="281.0" stroke="#343434" stroke-width="1.00" />
<rect x="1207.0" y="292.5" width="3.0" height="3.5" fill="#969696" />
<rect x="1213.0" y="292.5" width="4.0" height="2.5" fill="#707070" />
<rect x="1222.0" y="292.0" width="4.0" height="2.5" fill="#707070" />
<polygon points="1214.4,295.7 1223.3,294.8 1223.3,314.0 1214.4,314.7" fill="#2c2d30" />
<polygon points="1214.4,314.7 1223.3,314.0 1223.3,339.5 1214.4,339.8" fill="#26282b" />
<polygon points="1215.7,317.7 1222.0,317.0 1222.0,322.7 1215.7,322.7" fill="#645f5e" />
<polygon points="1215.7,324.7 1222.0,324.7 1222.0,335.8 1215.7,335.8" fill="#5e6466" />
<polygon points="1231.6,293.9 1240.6,292.9 1240.6,312.8 1231.6,313.5" fill="#2c2d30" />
<polygon points="1231.6,313.5 1240.6,312.8 1240.6,338.2 1231.6,338.5" fill="#26282b" />
<polygon points="1232.9,316.5 1239.3,315.8 1239.3,321.5 1232.9,321.5" fill="#645f5e" />
<polygon points="1232.9,323.5 1239.3,323.5 1239.3,334.5 1232.9,334.5" fill="#5e6466" />
<polygon points="1249.0,292.0 1258.5,291.0 1258.5,310.9 1249.0,311.6" fill="#2c2d30" />
<polygon points="1249.0,311.6 1258.5,310.9 1258.5,337.0 1249.0,337.3" fill="#26282b" />
<polygon points="1250.3,314.6 1257.2,313.9 1257.2,319.6 1250.3,319.6" fill="#645f5e" />
<polygon points="1250.3,321.6 1257.2,321.6 1257.2,333.3 1250.3,333.3" fill="#5e6466" />
<polygon points="1267.3,289.6 1288.1,287.4 1288.1,308.3 1267.3,309.8" fill="#2c2d30" />
<polygon points="1267.3,309.8 1288.1,308.3 1288.1,335.4 1267.3,336.1" fill="#26282b" />
<polygon points="1268.6,312.8 1286.8,311.3 1286.8,317.8 1268.6,317.8" fill="#645f5e" />
<polygon points="1268.6,319.8 1286.8,319.8 1286.8,332.1 1268.6,332.1" fill="#5e6466" />
<rect x="1276.8" y="313.0" width="1.8" height="21.0" fill="#26282b" />
<polygon points="1297.9,286.5 1308.0,285.4 1308.0,306.6 1297.9,307.3" fill="#2c2d30" />
<polygon points="1297.9,307.3 1308.0,306.6 1308.0,334.6 1297.9,334.9" fill="#26282b" />
<polygon points="1299.2,310.3 1306.7,309.6 1306.7,315.3 1299.2,315.3" fill="#645f5e" />
<polygon points="1299.2,317.3 1306.7,317.3 1306.7,330.9 1299.2,330.9" fill="#5e6466" />
<polygon points="1317.7,284.0 1332.2,282.5 1332.2,304.4 1317.7,305.5" fill="#2c2d30" />
<polygon points="1317.7,305.5 1332.2,304.4 1332.2,333.1 1317.7,333.6" fill="#26282b" />
<polygon points="1319.0,308.5 1330.9,307.4 1330.9,313.5 1319.0,313.5" fill="#645f5e" />
<polygon points="1319.0,315.5 1330.9,315.5 1330.9,329.6 1319.0,329.6" fill="#5e6466" />
<rect x="1221.0" y="345.9" width="9.0" height="32.0" fill="#26282b" />
<rect x="1221.0" y="345.9" width="9.0" height="4.0" fill="#2c2d30" />
<rect x="1222.3" y="351.4" width="6.4" height="5.0" fill="#625e5e" />
<rect x="1222.3" y="358.4" width="6.4" height="15.0" fill="#5e6466" />
<rect x="1249.0" y="344.7" width="8.8" height="32.0" fill="#26282b" />
<rect x="1249.0" y="344.7" width="8.8" height="4.0" fill="#2c2d30" />
<rect x="1250.3" y="350.2" width="6.2" height="5.0" fill="#625e5e" />
<rect x="1250.3" y="357.2" width="6.2" height="15.0" fill="#5e6466" />
<rect x="1267.0" y="343.4" width="9.9" height="32.0" fill="#26282b" />
<rect x="1267.0" y="343.4" width="9.9" height="4.0" fill="#2c2d30" />
<rect x="1268.3" y="348.9" width="7.3" height="5.0" fill="#625e5e" />
<rect x="1268.3" y="355.9" width="7.3" height="15.0" fill="#5e6466" />
<rect x="1297.3" y="342.2" width="10.4" height="32.0" fill="#26282b" />
<rect x="1297.3" y="342.2" width="10.4" height="4.0" fill="#2c2d30" />
<rect x="1298.6" y="347.7" width="7.8" height="5.0" fill="#625e5e" />
<rect x="1298.6" y="354.7" width="7.8" height="15.0" fill="#5e6466" />
<rect x="1316.9" y="341.0" width="11.6" height="32.0" fill="#26282b" />
<rect x="1316.9" y="341.0" width="11.6" height="4.0" fill="#2c2d30" />
<rect x="1318.2" y="346.5" width="9.0" height="5.0" fill="#625e5e" />
<rect x="1318.2" y="353.5" width="9.0" height="15.0" fill="#5e6466" />
<rect x="1258.4" y="383.0" width="9.9" height="34.4" fill="#26282b" />
<rect x="1258.4" y="383.0" width="9.9" height="4.0" fill="#2c2d30" />
<rect x="1259.7" y="388.5" width="7.3" height="5.0" fill="#625e5e" />
<rect x="1259.7" y="395.5" width="7.3" height="17.4" fill="#5e6466" />
<rect x="1277.5" y="383.0" width="9.9" height="34.4" fill="#26282b" />
<rect x="1277.5" y="383.0" width="9.9" height="4.0" fill="#2c2d30" />
<rect x="1278.8" y="388.5" width="7.3" height="5.0" fill="#625e5e" />
<rect x="1278.8" y="395.5" width="7.3" height="17.4" fill="#5e6466" />
<rect x="1296.6" y="383.0" width="10.7" height="34.4" fill="#26282b" />
<rect x="1296.6" y="383.0" width="10.7" height="4.0" fill="#2c2d30" />
<rect x="1297.9" y="388.5" width="8.1" height="5.0" fill="#625e5e" />
<rect x="1297.9" y="395.5" width="8.1" height="17.4" fill="#5e6466" />
<rect x="1316.5" y="383.0" width="14.5" height="34.4" fill="#26282b" />
<rect x="1316.5" y="383.0" width="14.5" height="4.0" fill="#2c2d30" />
<rect x="1317.8" y="388.5" width="11.9" height="5.0" fill="#625e5e" />
<rect x="1317.8" y="395.5" width="11.9" height="17.4" fill="#5e6466" />
<rect x="1210.6" y="383.0" width="9.0" height="34.4" fill="#26282b" />
<rect x="1210.6" y="383.0" width="9.0" height="4.0" fill="#2c2d30" />
<rect x="1211.9" y="388.5" width="6.4" height="5.0" fill="#625e5e" />
<rect x="1211.9" y="395.5" width="6.4" height="17.4" fill="#5e6466" />
<rect x="1205.0" y="380.0" width="14.5" height="38.0" fill="#303235" />
<rect x="1212.5" y="384.0" width="6.0" height="9.0" fill="#616a6d" />
<rect x="1212.5" y="398.0" width="6.0" height="13.0" fill="#616a6d" />
<rect x="1196.3" y="394.0" width="20.0" height="5.5" fill="#3d3f43" />
<polygon points="1196.0,429.0 1240.0,422.0 1240.0,418.0 1331.0,418.0 1331.0,448.0 1212.0,452.0 1196.0,454.0" fill="#353338" />
<polygon points="1206.0,418.0 1331.0,418.0 1331.0,433.5 1268.0,440.5 1206.0,443.0" fill="#303235" />
<line x1="1255.0" y1="441.1" x2="1329.0" y2="433.5" stroke="#151446" stroke-width="1.00" stroke-dasharray="4 4"/>
<polygon points="1211.0,445.4 1240.0,443.2 1262.0,444.0 1329.0,447.4 1329.0,454.8 1262.0,450.5 1240.0,449.5 1211.0,448.2" fill="#969993" />
<line x1="1214.0" y1="446.2" x2="1214.0" y2="447.6" stroke="#227070" stroke-width="0.80" />
<line x1="1217.0" y1="445.9" x2="1217.0" y2="447.7" stroke="#227070" stroke-width="0.80" />
<line x1="1223.0" y1="445.5" x2="1223.0" y2="448.1" stroke="#227070" stroke-width="0.80" />
<line x1="1226.0" y1="445.3" x2="1226.0" y2="448.2" stroke="#227070" stroke-width="0.80" />
<line x1="1229.0" y1="445.0" x2="1229.0" y2="448.4" stroke="#227070" stroke-width="0.80" />
<line x1="1232.0" y1="444.8" x2="1232.0" y2="448.6" stroke="#227070" stroke-width="0.80" />
<line x1="1238.0" y1="444.4" x2="1238.0" y2="448.9" stroke="#227070" stroke-width="0.80" />
<line x1="1241.0" y1="444.2" x2="1241.0" y2="449.1" stroke="#227070" stroke-width="0.80" />
<line x1="1244.0" y1="444.4" x2="1244.0" y2="449.2" stroke="#227070" stroke-width="0.80" />
<line x1="1247.0" y1="444.5" x2="1247.0" y2="449.4" stroke="#227070" stroke-width="0.80" />
<line x1="1253.0" y1="444.8" x2="1253.0" y2="449.7" stroke="#227070" stroke-width="0.80" />
<line x1="1256.0" y1="445.0" x2="1256.0" y2="449.9" stroke="#227070" stroke-width="0.80" />
<line x1="1259.0" y1="445.1" x2="1259.0" y2="450.1" stroke="#227070" stroke-width="0.80" />
<line x1="1262.0" y1="445.2" x2="1262.0" y2="450.3" stroke="#227070" stroke-width="0.80" />
<line x1="1268.0" y1="445.5" x2="1268.0" y2="450.6" stroke="#227070" stroke-width="0.80" />
<line x1="1271.0" y1="445.7" x2="1271.0" y2="450.8" stroke="#227070" stroke-width="0.80" />
<line x1="1274.0" y1="445.8" x2="1274.0" y2="450.9" stroke="#227070" stroke-width="0.80" />
<line x1="1277.0" y1="445.9" x2="1277.0" y2="451.1" stroke="#227070" stroke-width="0.80" />
<line x1="1283.0" y1="446.2" x2="1283.0" y2="451.4" stroke="#227070" stroke-width="0.80" />
<line x1="1286.0" y1="446.4" x2="1286.0" y2="451.6" stroke="#227070" stroke-width="0.80" />
<line x1="1289.0" y1="446.5" x2="1289.0" y2="451.8" stroke="#227070" stroke-width="0.80" />
<line x1="1292.0" y1="446.7" x2="1292.0" y2="451.9" stroke="#227070" stroke-width="0.80" />
<line x1="1298.0" y1="446.9" x2="1298.0" y2="452.3" stroke="#227070" stroke-width="0.80" />
<line x1="1301.0" y1="447.1" x2="1301.0" y2="452.4" stroke="#227070" stroke-width="0.80" />
<line x1="1304.0" y1="447.2" x2="1304.0" y2="452.6" stroke="#227070" stroke-width="0.80" />
<line x1="1307.0" y1="447.4" x2="1307.0" y2="452.8" stroke="#227070" stroke-width="0.80" />
<line x1="1313.0" y1="447.6" x2="1313.0" y2="453.1" stroke="#227070" stroke-width="0.80" />
<line x1="1316.0" y1="447.8" x2="1316.0" y2="453.3" stroke="#227070" stroke-width="0.80" />
<line x1="1319.0" y1="447.9" x2="1319.0" y2="453.4" stroke="#227070" stroke-width="0.80" />
<line x1="1322.0" y1="448.1" x2="1322.0" y2="453.6" stroke="#227070" stroke-width="0.80" />
<polygon points="1211.0,448.2 1240.0,449.5 1262.0,450.5 1329.0,454.8 1329.0,457.0 1262.0,452.7 1240.0,451.5 1211.0,449.8" fill="#948c56" />
<polygon points="1196.0,453.5 1211.0,449.8 1240.0,451.5 1262.0,452.7 1329.0,457.0 1329.0,460.6 1262.0,469.8 1196.0,478.5" fill="#353338" />
<line x1="1196.0" y1="478.5" x2="1329.0" y2="460.6" stroke="#151446" stroke-width="1.10" stroke-dasharray="4 4"/>
<rect x="1205.8" y="446.0" width="5.0" height="6.2" fill="#a2a2a2" />
<polygon points="1338.0,283.0 1341.0,279.0 1344.0,274.9 1347.0,279.0 1350.0,283.0 1350.0,330.0 1338.0,330.0" fill="#898988" />
<rect x="1338.0" y="283.0" width="12.0" height="2.0" fill="#a2a2a1" />
<rect x="1339.0" y="296.0" width="10.0" height="1.5" fill="#595959" />
<line x1="1344.0" y1="255.3" x2="1344.0" y2="275.0" stroke="#4c4c4c" stroke-width="1.00" />
<rect x="1350.0" y="288.3" width="14.3" height="3.7" fill="#969694" />
<rect x="1354.5" y="283.0" width="5.0" height="17.0" fill="#8c8c8b" />
<rect x="1356.0" y="280.0" width="3.0" height="4.0" fill="#707070" />
<polygon points="1361.2,298.8 1394.9,296.5 1394.9,312.2 1361.2,306.5" fill="#904e30" />
<line x1="1361.0" y1="298.0" x2="1397.0" y2="295.0" stroke="#343434" stroke-width="1.00" />
<rect x="1394.9" y="296.5" width="4.0" height="20.0" fill="#151446" />
<polygon points="1336.7,302.0 1395.0,312.0 1395.0,420.0 1336.7,420.0" fill="#966c57" />
<rect x="1338.0" y="306.0" width="12.0" height="36.0" fill="#8c8c8b" />
<rect x="1350.5" y="312.0" width="9.5" height="14.0" fill="#9c705e" />
<rect x="1350.5" y="326.0" width="9.5" height="16.0" fill="#6c6767" />
<rect x="1363.0" y="318.0" width="8.0" height="22.0" fill="#44484e" />
<rect x="1378.5" y="314.0" width="7.5" height="28.0" fill="#965438" />
<rect x="1386.5" y="318.0" width="8.0" height="20.0" fill="#41454a" />
<rect x="1375.5" y="316.0" width="3.0" height="26.0" fill="#9c735e" />
<rect x="1335.0" y="341.0" width="60.0" height="3.0" fill="#808586" />
<line x1="1335.0" y1="341.0" x2="1395.0" y2="341.0" stroke="#151446" stroke-width="1.00" stroke-dasharray="4 3"/>
<rect x="1336.0" y="345.0" width="16.0" height="36.0" fill="#996f5a" />
<rect x="1362.0" y="345.0" width="9.5" height="36.0" fill="#966c57" />
<rect x="1375.5" y="345.0" width="19.0" height="36.0" fill="#936956" />
<rect x="1376.0" y="355.0" width="14.0" height="17.0" fill="#4b4f54" />
<rect x="1378.0" y="358.0" width="10.0" height="12.0" fill="#383b41" />
<ellipse cx="1357.800" cy="364" rx="3.800" ry="14" fill="#264626"/>
<rect x="1356.0" y="347.0" width="3.0" height="5.0" fill="#683f16" />
<rect x="1359.5" y="362.0" width="2.5" height="8.0" fill="#26347c" />
<rect x="1338.0" y="360.0" width="10.0" height="3.0" fill="#7d7d78" />
<rect x="1340.0" y="372.0" width="8.0" height="8.0" fill="#34343a" />
<rect x="1341.0" y="371.0" width="6.0" height="2.0" fill="#a2a2a2" />
<rect x="1374.5" y="373.4" width="4.5" height="7.6" fill="#151446" />
<rect x="1375.5" y="374.4" width="2.5" height="5.6" fill="#787889" />
<rect x="1380.5" y="373.4" width="4.5" height="7.6" fill="#151446" />
<rect x="1381.5" y="374.4" width="2.5" height="5.6" fill="#787889" />
<rect x="1386.5" y="373.4" width="4.5" height="7.6" fill="#151446" />
<rect x="1387.5" y="374.4" width="2.5" height="5.6" fill="#787889" />
<rect x="1335.0" y="381.0" width="60.0" height="3.5" fill="#888b8b" />
<line x1="1335.0" y1="381.0" x2="1395.0" y2="381.0" stroke="#151446" stroke-width="1.00" stroke-dasharray="4 3"/>
<line x1="1335.0" y1="384.8" x2="1395.0" y2="384.8" stroke="#714a34" stroke-width="0.80" />
<rect x="1336.5" y="389.0" width="33.5" height="29.0" fill="#996d57" />
<rect x="1336.5" y="385.0" width="33.5" height="4.0" fill="#895f4c" />
<rect x="1374.0" y="385.0" width="20.5" height="35.0" fill="#896c5e" />
<rect x="1374.5" y="390.0" width="15.0" height="18.0" fill="#4c5055" />
<rect x="1376.0" y="392.0" width="5.5" height="14.0" fill="#363a3f" />
<rect x="1383.0" y="392.0" width="5.5" height="14.0" fill="#363a3f" />
<rect x="1377.0" y="405.0" width="6.0" height="2.0" fill="#0e0e12" />
<rect x="1374.5" y="410.5" width="4.5" height="8.0" fill="#151446" />
<rect x="1375.5" y="411.5" width="2.5" height="6.0" fill="#787889" />
<rect x="1380.5" y="410.5" width="4.5" height="8.0" fill="#151446" />
<rect x="1381.5" y="411.5" width="2.5" height="6.0" fill="#787889" />
<rect x="1386.5" y="410.5" width="4.5" height="8.0" fill="#151446" />
<rect x="1387.5" y="411.5" width="2.5" height="6.0" fill="#787889" />
<rect x="1340.0" y="413.5" width="28.0" height="4.5" fill="#7d7d78" />
<rect x="1338.0" y="414.0" width="5.0" height="3.0" fill="#a8a8a8" />
<polygon points="1335.5,302.4 1395.5,312.2 1395.5,316.0 1335.5,306.2" fill="#808586" />
<line x1="1335.5" y1="302.4" x2="1395.5" y2="312.2" stroke="#151446" stroke-width="1.20" stroke-dasharray="4 3"/>
<line x1="1335.5" y1="306.4" x2="1395.5" y2="316.2" stroke="#151446" stroke-width="1.00" stroke-dasharray="4 3"/>
<rect x="1335.0" y="421.2" width="60.0" height="25.5" fill="#909491" />
<rect x="1336.0" y="425.0" width="58.0" height="3.0" fill="#a2a59f" />
<rect x="1336.0" y="431.0" width="58.0" height="2.0" fill="#777e7d" />
<rect x="1336.0" y="436.0" width="58.0" height="2.5" fill="#9c9f99" />
<rect x="1336.0" y="440.5" width="58.0" height="1.5" fill="#217171" />
<rect x="1336.0" y="443.0" width="58.0" height="3.5" fill="#999370" />
<rect x="1330.0" y="330.0" width="2.0" height="32.0" fill="#a2a2a2" />
<line x1="1335.0" y1="421.5" x2="1395.0" y2="421.5" stroke="#151446" stroke-width="1.00" stroke-dasharray="4 4"/>
<rect x="1332.4" y="282.8" width="4.5" height="177.2" fill="#151446" />
<rect x="1360.3" y="312.0" width="3.0" height="30.0" fill="#151446" />
<rect x="1371.5" y="314.0" width="4.0" height="68.0" fill="#151446" />
<rect x="1351.5" y="342.0" width="4.0" height="40.0" fill="#151446" />
<rect x="1351.0" y="421.0" width="3.5" height="32.0" fill="#151446" />
<rect x="1370.0" y="382.0" width="4.0" height="70.0" fill="#151446" />
<rect x="1394.6" y="312.0" width="4.0" height="137.0" fill="#151446" />
<rect x="1398.4" y="426.6" width="27.0" height="22.2" fill="#484a4c" />
<polygon points="1399.5,428.5 1400.0,425.2 1408.0,425.2 1411.0,428.5" fill="#236723" />
<rect x="1413.0" y="427.0" width="12.0" height="21.5" fill="#4b4d52" />
<rect x="1419.9" y="441.8" width="1.0" height="1.0" fill="#151446" />
<rect x="1421.7" y="445.8" width="1.0" height="1.0" fill="#151446" />
<rect x="1421.1" y="445.4" width="1.0" height="1.0" fill="#151446" />
<rect x="1413.3" y="436.3" width="1.0" height="1.0" fill="#151446" />
<rect x="1423.4" y="440.0" width="1.0" height="1.0" fill="#151446" />
<rect x="1422.9" y="429.3" width="1.0" height="1.0" fill="#151446" />
<rect x="1418.2" y="431.9" width="1.0" height="1.0" fill="#151446" />
<rect x="1419.0" y="438.5" width="1.0" height="1.0" fill="#151446" />
<rect x="1413.1" y="431.3" width="1.0" height="1.0" fill="#151446" />
<rect x="1416.1" y="445.3" width="1.0" height="1.0" fill="#151446" />
<rect x="1421.4" y="430.2" width="1.0" height="1.0" fill="#151446" />
<rect x="1421.8" y="429.8" width="1.0" height="1.0" fill="#151446" />
<rect x="1419.8" y="429.5" width="1.0" height="1.0" fill="#151446" />
<rect x="1413.0" y="444.4" width="1.0" height="1.0" fill="#151446" />
<rect x="1415.3" y="431.3" width="1.0" height="1.0" fill="#151446" />
<rect x="1423.8" y="444.4" width="1.0" height="1.0" fill="#151446" />
<rect x="1416.2" y="446.2" width="1.0" height="1.0" fill="#151446" />
<rect x="1418.9" y="440.6" width="1.0" height="1.0" fill="#151446" />
<rect x="1415.3" y="445.8" width="1.0" height="1.0" fill="#151446" />
<rect x="1420.6" y="446.3" width="1.0" height="1.0" fill="#151446" />
<rect x="1422.8" y="433.0" width="1.0" height="1.0" fill="#151446" />
<rect x="1417.0" y="430.3" width="1.0" height="1.0" fill="#151446" />
<rect x="1414.6" y="428.3" width="1.0" height="1.0" fill="#151446" />
<rect x="1416.3" y="439.1" width="1.0" height="1.0" fill="#151446" />
<rect x="1413.0" y="440.6" width="1.0" height="1.0" fill="#151446" />
<rect x="1416.7" y="433.2" width="1.0" height="1.0" fill="#151446" />
<rect x="1422.0" y="436.6" width="1.0" height="1.0" fill="#151446" />
<rect x="1416.5" y="436.6" width="1.0" height="1.0" fill="#151446" />
<rect x="1411.5" y="427.0" width="1.5" height="22.0" fill="#151446" />
<rect x="1423.8" y="424.0" width="1.5" height="25.0" fill="#151446" />
<line x1="1185.0" y1="334.0" x2="1194.0" y2="334.6" stroke="#c01818" stroke-width="1.50" />
<line x1="1194.0" y1="334.6" x2="1208.8" y2="333.5" stroke="#18a818" stroke-width="1.50" />
<line x1="811.0" y1="255.0" x2="1173.0" y2="146.0" stroke="#2f7689" stroke-width="1.10" />
<line x1="1173.0" y1="146.0" x2="1426.0" y2="239.0" stroke="#2f7689" stroke-width="1.10" />
<line x1="1173.0" y1="146.0" x2="1171.0" y2="548.0" stroke="#2f7689" stroke-width="1.10" />
<line x1="811.0" y1="255.0" x2="811.0" y2="478.0" stroke="#2f7689" stroke-width="1.10" />
<line x1="1426.0" y1="239.0" x2="1423.0" y2="490.0" stroke="#2f7689" stroke-width="1.10" />
<line x1="811.0" y1="478.0" x2="1171.0" y2="548.0" stroke="#2f7689" stroke-width="1.10" />
<line x1="1171.0" y1="548.0" x2="1423.0" y2="490.0" stroke="#2f7689" stroke-width="1.10" />
<line x1="1101.8" y1="248.0" x2="1101.8" y2="155.0" stroke="#1414a2" stroke-width="1.60" />
<polygon points="1102.0,138.5 1108.2,156.0 1095.8,156.0" fill="#1414a2" />
<line x1="1099.6" y1="470.0" x2="1099.6" y2="573.0" stroke="#1414a2" stroke-width="1.60" />
<polygon points="1099.6,590.5 1105.8,572.5 1093.4,572.5" fill="#1414a2" />
<line x1="1328.0" y1="358.3" x2="1452.0" y2="354.0" stroke="#1414a2" stroke-width="2.30" />
<polygon points="1479.2,353.4 1451.6,345.5 1452.2,362.0" fill="#1414a2" />
<line x1="109.0" y1="679.0" x2="109.0" y2="656.0" stroke="#1818a0" stroke-width="1.60" />
<polygon points="109.0,653.0 111.2,660.0 106.8,660.0" fill="#1818a0" />
<line x1="108.0" y1="680.8" x2="90.0" y2="680.8" stroke="#a01818" stroke-width="1.50" />
<polygon points="84.0,680.8 92.0,678.2 92.0,683.4" fill="#a01818" />
<line x1="110.0" y1="680.8" x2="122.0" y2="680.8" stroke="#18a018" stroke-width="1.50" />
<polygon points="130.0,680.8 121.0,677.6 121.0,684.0" fill="#18a018" />
<circle cx="108.800" cy="680.500" r="3.800" fill="#808080"/><circle cx="108" cy="679.600" r="1.200" fill="#a8a8a8"/>
<text x="108.300" y="647.500" font-family="Liberation Sans, sans-serif" font-size="9" fill="#1a1ab0">Z</text>
<text x="76.500" y="680.500" font-family="Liberation Sans, sans-serif" font-size="8.500" fill="#a81818">X</text>
<text x="135.500" y="680.200" font-family="Liberation Sans, sans-serif" font-size="8.500" fill="#18a018">Y</text>
<circle cx="26" cy="790" r="12" fill="#3e3e3e"/><text x="26" y="794.600" text-anchor="middle" font-family="Liberation Sans, sans-serif" font-size="15" font-weight="bold" fill="#b4b4b4">?</text>
<!--/SCENE--></svg>

<!-- TOP BAR -->
<div id="topbar">
  <div id="logo">BiM<i>i</i>T</div>
  <div class="tdiv" style="left:433px"></div>
  <div id="space">Базовое пространство</div>
  <div id="proj">Школа</div>
  <div class="tdiv" style="left:1602px"></div>
  <svg class="abs" style="left:0;top:0" width="1830" height="28" viewBox="0 0 1830 28" fill="none" stroke="#8a8a8a">
<!-- briefcase -->
<g stroke-width="2"><rect x="340" y="7" width="18" height="12.2" rx="1.6"/><path d="M346 7V4.200q0-.9.9-.9h4.200q.9 0 .9.900V7M340 11.700h18"/><rect x="347.200" y="11.700" width="3.600" height="2.600" fill="#8a8a8a" stroke="none"/></g>
<!-- people -->
<g><circle cx="382.900" cy="6.900" r="2.300" stroke-width="1.800"/><path d="M378 19V15q0-3.200 2.600-3.200h4.600q2.600 0 2.600 3.200V19Z" stroke-width="1.900" stroke-linejoin="round"/><circle cx="374.900" cy="11.100" r="2.200" fill="#8a8a8a" stroke="none"/><circle cx="391" cy="11.100" r="2.200" fill="#8a8a8a" stroke="none"/><path d="M370.800 19.900Q370.800 14.300 375.900 14.200L375 19.900ZM395.200 19.900Q395.200 14.300 390 14.200L391 19.900Z" fill="#8a8a8a" stroke="none"/></g>
<!-- shield -->
<g stroke-width="1.600"><path d="M417.500 20.300Q416.600 20.700 415.600 20.600Q408.600 17.600 408.800 9.500V6.300L415.700 3.400L422.600 6.300V10.600"/><circle cx="422.100" cy="16.800" r="5.100" fill="#3c3c3c"/><circle cx="422.100" cy="15.600" r="1.200" fill="#8a8a8a" stroke="none"/><path d="M419.700 19.300Q422.100 17 424.500 19.300Z" fill="#8a8a8a" stroke="none"/></g>
<!-- dropdown arrow -->
<path d="M617.500 9.400h10.600l-5.300 5.300Z" fill="#b0b0b0" stroke="none"/>
<!-- gear -->
<g transform="translate(1073.900 11.900) scale(1.060)" stroke-width="2.100" stroke-linejoin="round"><circle r="3.100"/><path id="gearp" d="M-1.700 -9.400h3.400l.5 2.500l2.050 1.180l2.400-.82l1.700 2.940l-1.900 1.700v2.400l1.900 1.700l-1.700 2.940l-2.400-.82l-2.050 1.180l-.5 2.500h-3.400l-.5-2.500l-2.050-1.180l-2.400.82l-1.700-2.940l1.900-1.700v-2.400l-1.900-1.700l1.700-2.940l2.400.82l2.050-1.180Z"/></g>
<!-- share -->
<path d="M1119.200 11.800L1111.400 4.800V9Q1103.200 10.200 1101.400 19.400Q1105.200 14.600 1111.400 14.600V18.800Z" fill="#8a8a8a" stroke="none"/>
<!-- search -->
<g stroke-width="2"><circle cx="1633.600" cy="9.900" r="5.700"/><path d="M1637.600 14.200L1644.300 20.600"/></g>
<!-- list -->
<g stroke-width="2"><path d="M1699.600 5.600h14.200M1699.600 11.500h14.200M1699.600 17.500h14.200"/><circle cx="1696.400" cy="5.600" r="1.400" fill="#8a8a8a" stroke="none"/><circle cx="1696.400" cy="11.500" r="1.400" fill="#8a8a8a" stroke="none"/><circle cx="1696.400" cy="17.500" r="1.400" fill="#8a8a8a" stroke="none"/></g>
<!-- bell -->
<g fill="#8a8a8a" stroke="none"><path d="M1737.900 2q1.100 0 1.100 1.300v.6q5 1.200 5 7V16.200l2.100 2.100v.7h-16.400v-.7l2.100-2.100V10.900q0-5.800 5-7v-.6q0-1.300 1.100-1.300Z"/><path d="M1735.700 20h4.400a2.200 2.200 0 0 1-4.400 0Z"/></g>
<!-- history 10 -->
<g stroke-width="1.700"><path d="M1772.200 6.500A6.800 6.800 0 1 0 1778 12.600"/><path d="M1772.100 1.200L1777 5.800L1772.100 10.400Z" fill="#8a8a8a" stroke="none"/><text x="1771.600" y="15.900" font-family="Liberation Sans, sans-serif" font-size="5.600" text-anchor="middle" fill="#b8b8b8" stroke="none">10</text><rect x="1778.200" y="12.700" width="1.500" height="1.500" fill="#d0d0d0" stroke="none"/><circle cx="1779" cy="18.900" r="4.100" fill="#701010" stroke="none"/></g>
<!-- account -->
<g stroke="none"><rect x="1797" y="2.900" width="18" height="17.800" rx="2" fill="#8e8e8e"/><circle cx="1806" cy="9" r="3.400" fill="#3c3c3c"/><path d="M1799.900 17.800v-.8q0-2.900 6.100-2.900q6.100 0 6.100 2.900v.8Z" fill="#3c3c3c"/></g>
</svg>


</div>
<div id="rightedge"></div>
<div class="abs" style="left:280px;top:816px;width:1167px;height:1px;background:#202a3c"></div>

<!-- LEFT TOOLBAR -->
<div id="ltool">
<div class="lbtn" style="top:36px"><svg viewBox="0 0 48 48" fill="none" stroke="#8b8b8b" stroke-width="2"><rect x="8" y="9" width="12" height="6" rx="3" fill="#8b8b8b" stroke="none"/><path d="M19 12h3.6q1.6 0 1.6 1.6V36h4.6M24.2 16h4.6M24.2 26h4.6"/><rect x="31" y="14" width="9" height="4" rx="2" fill="#8b8b8b" stroke="none"/><rect x="31" y="24" width="9" height="4" rx="2" fill="#8b8b8b" stroke="none"/><rect x="31" y="34" width="9" height="4" rx="2" fill="#8b8b8b" stroke="none"/></svg></div>
<div class="lbtn" style="top:86px"><svg viewBox="0 0 48 48" fill="none" stroke="#8b8b8b" stroke-width="2" stroke-linecap="round" stroke-linejoin="round"><path d="M10.5 14.2C24 14.2 22 31.4 39 31.4M10.5 31.2C24 31.2 22 14.3 39 14.3M31 8.8Q34 13 39.4 14.3Q33.5 15.5 31 19.8M31 26Q34 30.2 39.4 31.4Q33.5 32.6 31 37"/></svg></div>
<div class="lbtn" style="top:136px"><svg viewBox="0 0 48 48" fill="none" stroke="#8b8b8b" stroke-width="2.4" stroke-linecap="round" stroke-linejoin="round"><path d="M30.6 13.6Q23 12.6 15.4 13.8L26.4 23L15.4 32.4Q23 31.6 30.6 32.6"/></svg></div>
<div class="lbtn" style="top:186px"><svg viewBox="0 0 48 48" fill="none" stroke="#8b8b8b" stroke-width="2.4" stroke-linecap="round" stroke-linejoin="round"><path d="M26.4 14.2Q19 13.2 11.6 14.4L22.6 23.6L11.6 33Q19 32.2 26.4 33.2"/><path d="M28.2 24h9.6M33 19.2v9.6" stroke-width="1.4"/></svg></div>
<div class="lbtn" style="top:236px"><svg viewBox="0 0 48 48" fill="none" stroke="#8b8b8b" stroke-width="1.5" stroke-linejoin="round"><path d="M12 10Q24 8.6 36.4 10.2Q33.4 22 34.6 36.8H12Z"/><path d="M24.4 36.6L26 33.4h8.4v3.2Z" fill="#8b8b8b" stroke="none"/><text x="23" y="26.6" font-family="Liberation Sans, sans-serif" font-size="9.5" text-anchor="middle" fill="#8b8b8b" stroke="none">2D</text></svg></div>
<div class="lbtn" style="top:286px"><svg viewBox="0 0 48 48" fill="none" stroke="#8b8b8b" stroke-width="1.8" stroke-linecap="round" stroke-linejoin="round"><path d="M12.4 16.4Q17 11 19 11.2Q20.6 11.4 25.6 18.2Q30 14.4 36.4 8.6"/><path d="M12.2 24Q15 21.4 16.4 22.6Q19 26.2 21.6 28.6Q29 24.4 35.8 23.8"/><path d="M12 36.2h24" stroke-width="2.2" stroke-linecap="butt"/></svg></div>
<div class="lbtn" style="top:336px"><svg viewBox="0 0 48 48" fill="none" stroke="#8b8b8b" stroke-width="1.6" stroke-linejoin="round"><path d="M19.6 13.8v-1.8a3.5 3.5 0 0 1 7 0v1.8h5.4a2.6 2.6 0 0 1 2.6 2.6v5.6h1.6a3.2 3.2 0 0 1 0 6.4h-1.6v5.8a2.6 2.6 0 0 1 -2.6 2.6h-5.6v-2.4a3.2 3.2 0 0 0 -6.4 0v2.4h-5.8a2.6 2.6 0 0 1 -2.6 -2.6v-6h2a3.2 3.2 0 0 0 0 -6.4h-2v-5.4a2.6 2.6 0 0 1 2.6 -2.6Z"/></svg></div>
<div class="lbtn" style="top:386px"><svg viewBox="0 0 48 48" fill="none" stroke="#8b8b8b" stroke-width="1.6" stroke-linecap="round" stroke-linejoin="round"><circle cx="23.5" cy="16.4" r="5.6"/><path d="M23 33.8H11.4Q12.4 24 23.5 23.6Q30.6 23.8 34.2 29.6"/><path d="M27.6 33.2L31.8 38L39.4 30.2" stroke-width="2.6"/></svg></div>
<div class="lbtn" style="top:436px"><svg viewBox="0 0 48 48" fill="none" stroke="#8b8b8b" stroke-width="1.6" stroke-linecap="round" stroke-linejoin="round"><path d="M9 14.4Q13 13.6 17.6 14.2Q19 15.4 20.6 17.8H29.4Q31 18 31.6 20.6L34.4 34H14.6Q13 33.6 12.4 31Z"/><path d="M34.4 34L39.2 27.4Q39 26 36 26H21.4M26.2 21.8L21.2 26.4L26.2 31"/></svg></div>
<div class="lbtn" style="top:486px"><svg viewBox="0 0 48 48" fill="none" stroke="#8b8b8b" stroke-width="1.6" stroke-linecap="round" stroke-linejoin="round"><circle cx="18.4" cy="15.8" r="5.2"/><path d="M26.6 30.2H8.6Q9.6 22 18.4 21.8Q22 21.8 24.6 23.8"/><path d="M32.7 37.2Q27 32 27 28.2a5.7 5.7 0 0 1 11.4 0Q38.4 32 32.7 37.2Z"/><circle cx="32.7" cy="27.8" r="1.5" fill="#8b8b8b" stroke="none"/></svg></div>
<div class="lbtn" style="top:536px"><svg viewBox="0 0 48 48" fill="none" stroke="#8b8b8b" stroke-width="2"><circle cx="24" cy="21.7" r="13.1"/><path d="M22 34.8v3.4" stroke-width="3.2"/><rect x="9" y="37.9" width="30" height="2.3" fill="#8b8b8b" stroke="none"/><path d="M25.8 14.8L25.4 26.2Q23 28.6 20.4 25.6Z" fill="#8b8b8b" stroke="none"/><path d="M14.8 22.6A9.4 9.4 0 0 1 33.2 22.6" stroke-width="1.2" stroke-dasharray="1.6 1.3" stroke="#8a8a8a"/></svg></div>
<div class="abs" style="left:59px;top:36px;width:32px;height:32px;background:#3c3c3c"><svg class="abs" style="left:0;top:0" width="32" height="32" viewBox="0 0 32 32" fill="none" stroke="#a0a0a0" stroke-width="1"><path d="M4.5 12V4.5H12M20 4.5h7.5V12M27.500 20v7.500H20M12 27.500H4.500V20"/><path d="M16 9.200L21.900 12.600V19.400L16 22.800L10.100 19.400V12.600Z" fill="#8b8b8b" stroke="none"/></svg></div>

</div>

<!-- RIGHT TOOLBAR -->
<div id="rtool">
<svg class="abs" style="left:0;top:0" width="36" height="772" viewBox="1794 36 36 772" fill="none" stroke="#989898" stroke-width="1.2">
<!-- separators -->
<g stroke="none" fill="#1e1e1e"><rect x="1794" y="127.500" width="36" height="1.500"/><rect x="1794" y="352.500" width="36" height="1.500"/><rect x="1794" y="401.500" width="36" height="1.500"/><rect x="1794" y="582.500" width="36" height="1.500"/><rect x="1794" y="675.700" width="36" height="1.500"/></g>
<!-- cloud tree -->
<path d="M1812.300 54.300V70.800M1807.200 58.700L1812.300 61.900M1817 61.900L1812.300 64.500" stroke-width="1.300"/>
<path d="M1809.400 65.300H1806.400a5.300 5.300 0 0 1 -.8 -10.500a6.900 6.900 0 0 1 13.400 -.6a5.600 5.600 0 0 1 -.6 11.100H1815.400" stroke-width="1.300"/>
<!-- screen focus -->
<path d="M1823.100 98.200V91.400H1799.200V108.600H1807.600V111.400H1805"/>
<path d="M1809.200 104.300V100.400H1813.200M1821 100.400H1825V104.300M1825 112.400V116.300H1821M1813.200 116.300H1809.200V112.400"/>
<path d="M1817 104L1821.100 106.350V111.050L1817 113.400L1812.900 111.050V106.350Z" fill="#989898" stroke="none"/>
<!-- ruler -->
<rect x="1799.500" y="148.600" width="25" height="7.600"/>
<path d="M1803.400 152V156M1808.800 152V156M1814.200 152V156M1819.500 152V156M1806 153.800V156M1811.400 153.800V156M1817 153.800V156M1822.400 153.800V156" stroke-width="1.100"/>
<rect x="1798.900" y="157.900" width="26.200" height="1.900" fill="#989898" stroke="none"/>
<!-- section plane -->
<path d="M1816.700 183.400L1807.200 191V210.700L1816.700 202.500Z" fill="#909090" stroke="none"/>
<path d="M1798.900 199.300L1807.600 193.200H1825.300L1816.700 199.300Z"/>
<!-- cube section (selected) -->
<rect x="1796" y="225" width="32" height="32" fill="#5a5a5a" stroke="none"/>
<path d="M1809.700 234.500L1814.600 230.800V247L1809.700 251Z" fill="#8c8c8c" stroke="none"/>
<g stroke="#a0a0a0" stroke-width="1"><rect x="1800.500" y="235.700" width="15.800" height="15.800"/><rect x="1807.500" y="230.400" width="16.300" height="15.800"/><path d="M1800.500 235.700L1807.500 230.400M1816.300 235.700L1823.800 230.400M1816.300 251.500L1823.800 246.200M1800.500 251.500L1807.500 246.200"/></g>
<!-- floor plan -->
<path d="M1801 274.800H1823.600V292H1798.700V277.200Z"/>
<path d="M1798.700 294.300H1825.300V276" stroke-width="2.200"/>
<path d="M1810.500 275V292M1798.800 283.300H1823.500" stroke-dasharray="2.200 1.300"/>
<path d="M1816.300 292V290.200H1823.600" />
<!-- target -->
<circle cx="1811.800" cy="329.100" r="8" stroke-width="1.700"/><circle cx="1811.800" cy="329.100" r="4.200" fill="#989898" stroke="none"/>
<path d="M1811.800 318.400V321M1811.800 337.200V339.800M1801.100 329.100H1803.700M1819.900 329.100H1822.500" stroke-width="1.700"/>
<!-- grid 1 2 -->
<path d="M1797 381.800L1826.900 365M1797.500 391.700L1826.900 375.200M1798.300 376.100L1816.700 387.200M1806.900 370L1825.600 380.800" stroke-width="1"/>
<text x="1796.800" y="374.200" font-family="Liberation Sans, sans-serif" font-size="5.500" font-weight="bold" fill="#a0a0a0" stroke="none">1</text>
<text x="1807.200" y="367.800" font-family="Liberation Sans, sans-serif" font-size="5.500" font-weight="bold" fill="#a0a0a0" stroke="none">2</text>
<!-- dashed boxes -->
<g stroke="#b0b0b0" stroke-width="1" stroke-dasharray="2 2"><rect x="1800.500" y="415.500" width="23" height="23"/><rect x="1800.500" y="459.500" width="23" height="23"/><rect x="1800.500" y="503.500" width="23" height="23"/><rect x="1800.500" y="547.500" width="23" height="23"/></g>
<!-- cube outline -->
<path d="M1811.900 420L1817.700 423.600V430.800L1811.900 434L1806.200 430.800V423.600ZM1806.200 423.600L1811.900 427.200L1817.700 423.600M1811.900 427.200V434" stroke-width="1"/>
<!-- eye -->
<path d="M1804.600 471.100Q1808 465.900 1812 465.900Q1816 465.900 1819.600 471.100Q1816 476.300 1812 476.300Q1808 476.300 1804.600 471.100Z" fill="#989898" stroke="none"/>
<circle cx="1812" cy="471.100" r="2.500" fill="#989898" stroke="#3c3c3c" stroke-width="1.300"/>
<!-- eye off -->
<path d="M1804.600 514.800Q1808 509.600 1812 509.600Q1816 509.600 1819.600 514.800Q1816 520 1812 520Q1808 520 1804.600 514.800Z" fill="#989898" stroke="none"/>
<circle cx="1812" cy="514.800" r="2.500" fill="#989898" stroke="#3c3c3c" stroke-width="1.300"/>
<path d="M1805.600 507.900L1819.400 521.100" stroke="#3c3c3c" stroke-width="1.400"/>
<path d="M1804.800 508.700L1818.600 521.900" stroke="#989898" stroke-width="1.400"/>
<!-- x box -->
<rect x="1810" y="557" width="16.200" height="15.600" fill="#8e8e8e" stroke="none"/>
<path d="M1813.800 560.500L1822.400 569.100M1822.400 560.500L1813.800 569.100" stroke="#333" stroke-width="1.300"/>
<!-- cube solid -->
<rect x="1796" y="592" width="32" height="32" fill="#5a5a5a" stroke="none"/>
<path d="M1800.400 599L1812.300 596.500L1823.300 599.300L1811.900 603.700Z" fill="#505050" stroke="#8a8a8a" stroke-width="1"/>
<path d="M1811.900 603.700L1823.300 599.300L1822.500 610.700L1811.900 620.300Z" fill="#525252" stroke="#8a8a8a" stroke-width="1"/>
<path d="M1800.400 599L1811.900 603.700V620.300L1801.500 612.600Z" fill="#8a8a8a" stroke="#8a8a8a" stroke-width="1"/>
<!-- orbit -->
<rect x="1796" y="636" width="32" height="32" fill="#5a5a5a" stroke="none"/>
<ellipse cx="1811.900" cy="652.100" rx="11" ry="5.400" stroke="#8c8c8c" stroke-width="1.800"/>
<ellipse cx="1811.900" cy="652.100" rx="4.400" ry="10" stroke="#8c8c8c" stroke-width="1.800"/>
<path d="M1811.900 649.400V653L1808.800 656.200M1811.900 653L1815 656.200" stroke="#a8a8a8" stroke-width=".8"/>
<!-- corner triangle -->
<path d="M1796 802.500V807H1800.500Z" fill="#b0b0b0" stroke="none"/>

</svg>

</div>

<!-- PANEL -->
<div id="panel">
  <div id="ptitle">Куб сечений</div>
  <div id="pbar"><svg class="abs" style="left:0;top:0" width="296" height="32" viewBox="1495 72 296 32" fill="none">
<rect x="1501.500" y="81" width="12.400" height="12.600" fill="#2f6478"/>
<path d="M1515.500 83V96H1504" stroke="#2f6478" stroke-width="1.600" stroke-dasharray="1.300 1"/>
<path d="M1531.400 83L1543 94.600M1543 83L1531.400 94.600" stroke="#2f6a80" stroke-width="1.700"/>
<circle cx="1680" cy="87.800" r="7.300" stroke="#2f6a80" stroke-width="1.300"/>
<path d="M1675.800 87.800H1684.200M1680 83.600V92" stroke="#2f6a80" stroke-width="1.500"/>
<text x="1695.300" y="92.200" font-family="Liberation Sans, sans-serif" font-size="12" letter-spacing="1.350" fill="#2f6a80">Добавить</text>
<g transform="translate(1775 87) scale(.74)"><path d="M-1.700 -9.400h3.400l.5 2.500l2.050 1.180l2.400-.82l1.700 2.940l-1.900 1.700v2.400l1.900 1.700l-1.700 2.940l-2.400-.82l-2.050 1.180l-.5 2.500h-3.400l-.5-2.500l-2.050-1.180l-2.400.82l-1.700-2.940l1.900-1.700v-2.400l-1.900-1.700l1.700-2.940l2.400.82l2.050-1.180Z" fill="#4a4a4a"/><circle r="3.200" fill="#999"/></g>
</svg></div>
  <svg class="abs" style="left:272px;top:10px" width="16" height="16" viewBox="0 0 16 16"><path d="M1.500 1.500L14.500 14.500M14.500 1.500L1.500 14.500" stroke="#b4b4b4" stroke-width="1.800"/></svg>
  <div id="plist"><div class="abs" style="left:288px;top:0;width:8px;height:230px;background:#494949"></div><div class="abs" style="left:288px;top:0;width:8px;height:55px;background:#2f6074"></div>
    <div class="pi" style="left:7.500px;top:1px;font-style:italic;letter-spacing:2.100px;font-size:11.500px;color:#363636">ЭТАЖИ</div>
    <div class="pi" style="top:33px">-1. Этаж</div>
    <div class="pi" style="top:63px">1-й этаж</div>
    <div class="pi" style="top:93px">3-й этаж</div>
    <div class="pi" style="top:123px">4-й этаж</div>
    <div class="pi" style="top:153px">Верх ростверка</div>
    <div class="pi" style="top:183px">Земля</div>
    <div class="pi" style="top:213px">Земля-2</div>
  </div>
</div>

<!-- DIALOG -->
<div id="dlg">
  <div id="dhead"><svg class="abs" style="left:352px;top:15px" width="16" height="16" viewBox="0 0 16 16"><path d="M1.800 1.300L14.200 13.700M14.200 1.300L1.800 13.700" stroke="#fff" stroke-width="2"/></svg><div id="dtitle">Новый куб сечений</div></div>
  <div id="dinp">Куб сечений 10.06.2025, 11:46:05</div>
  <div class="dbtn" style="left:129px;width:108px;background:#c1c1c1;color:#333">Отменить</div>
  <div class="dbtn" style="left:245px;width:115px;background:#3d93ae;color:#fff">Сохранить</div>
</div>

<!-- OVERLAY (arrows, help) -->
<svg id="over" class="abs" style="left:0;top:0;pointer-events:none" width="1832" height="817" viewBox="0 0 1832 817">
<!--OVER-->
<defs><filter id="sh" x="-20%" y="-20%" width="140%" height="140%"><feGaussianBlur stdDeviation="2.500"/></filter></defs>
<g filter="url(#sh)" opacity=".5" transform="translate(4 5)"><polygon points="1238.9,241.1 1026.1,329.8 1023.9,324.6 1013.0,337.3 1029.7,338.4 1027.6,333.3 1240.1,243.9" fill="#000"/><polygon points="1664.3,218.7 1694.4,115.5 1699.5,116.9 1696.5,99.5 1685.0,112.9 1690.0,114.3 1662.7,218.3" fill="#000"/></g>
<polygon points="1238.9,241.1 1026.1,329.8 1023.9,324.6 1013.0,337.3 1029.7,338.4 1027.6,333.3 1240.1,243.9" fill="#cc0202"/><polygon points="1664.3,218.7 1694.4,115.5 1699.5,116.9 1696.5,99.5 1685.0,112.9 1690.0,114.3 1662.7,218.3" fill="#cc0202"/>
<path d="M1791 321.500L1779 333.500M1791 325L1782.500 333.500M1791 328.500L1786 333.500" stroke="#8c8c8c" stroke-width="1"/>
</svg>

</div>
</body>
</html>
